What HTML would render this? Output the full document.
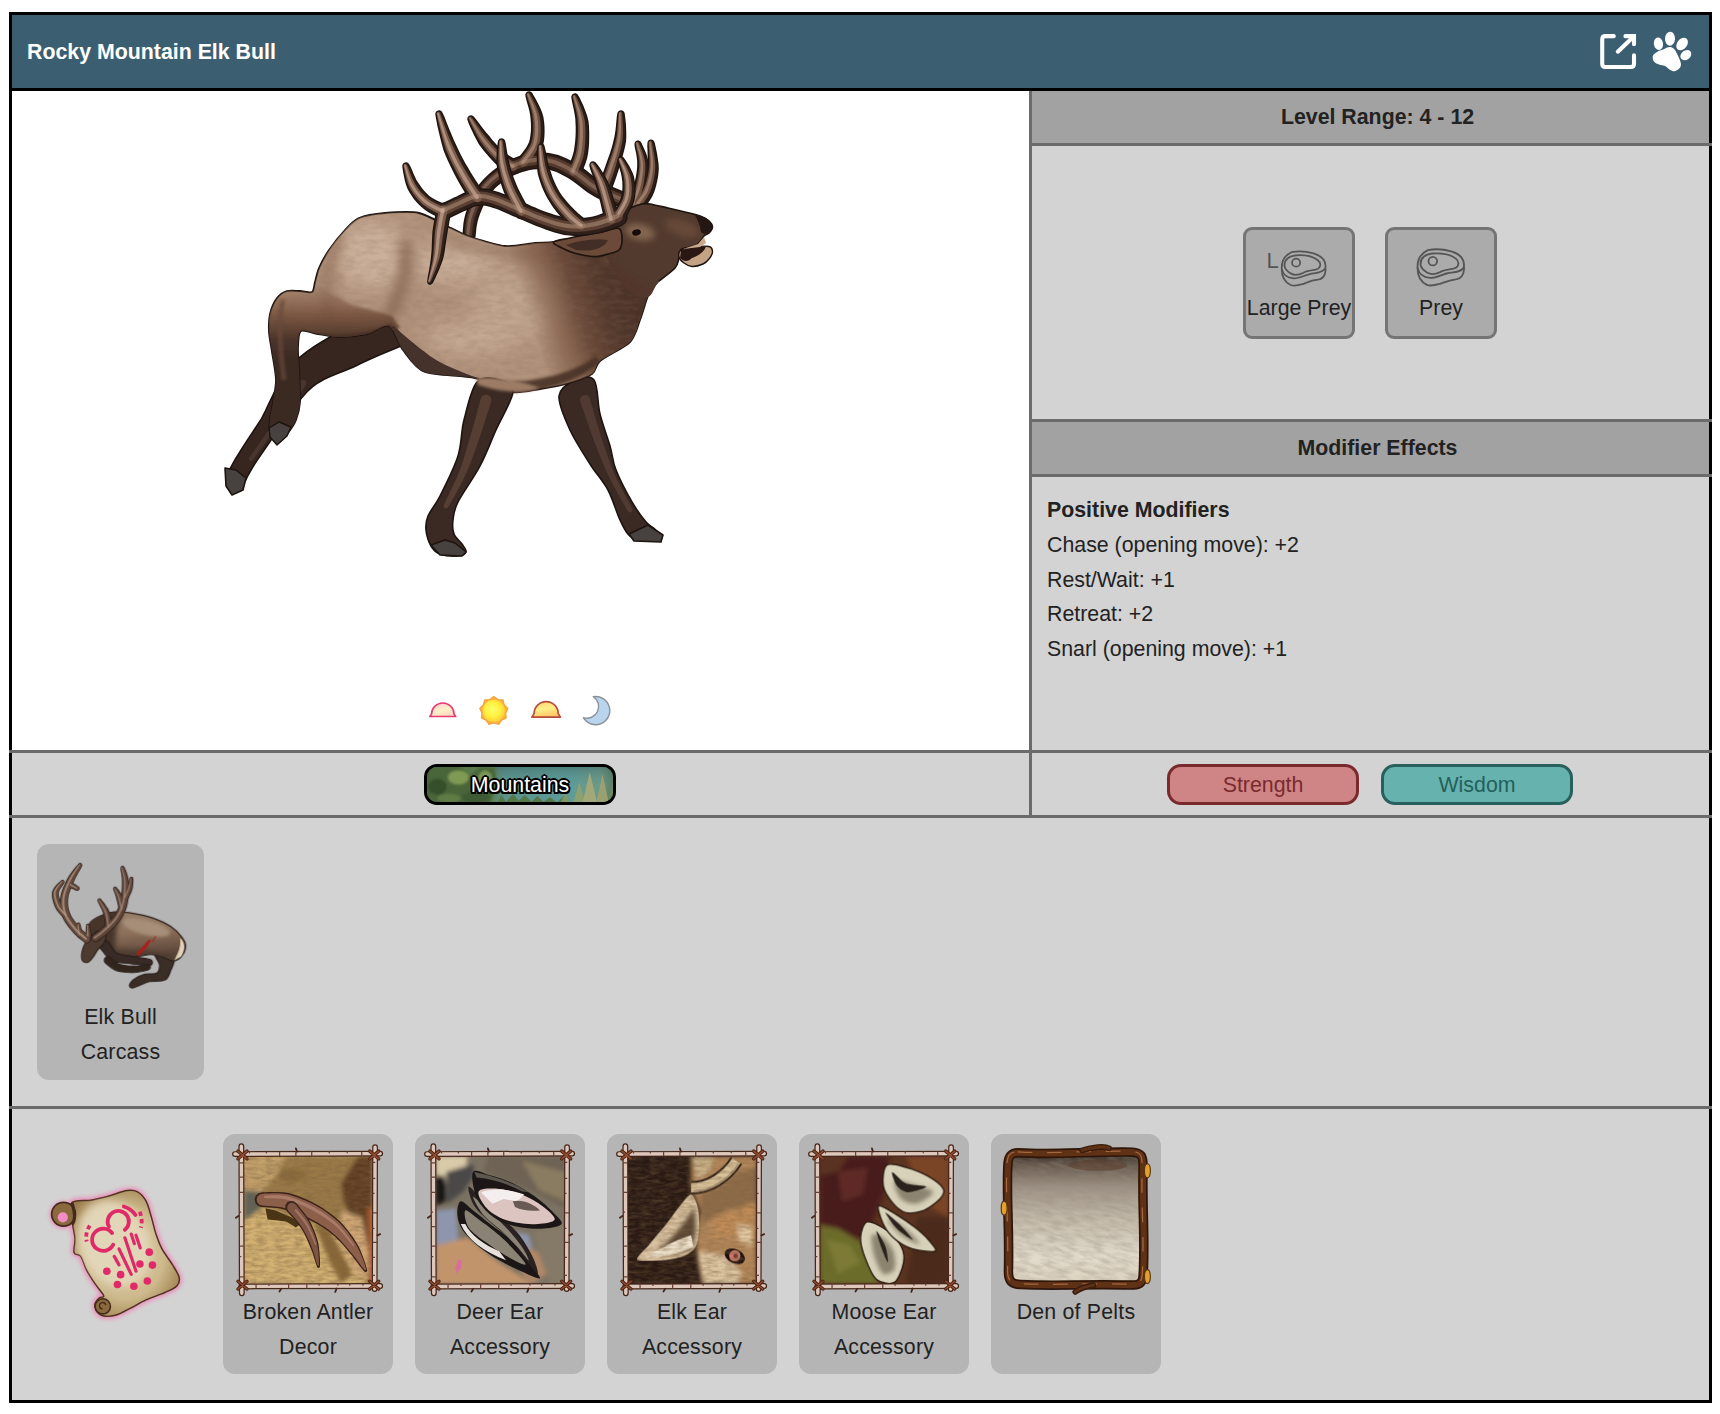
<!DOCTYPE html>
<html lang="en">
<head>
<meta charset="utf-8">
<title>Rocky Mountain Elk Bull</title>
<style>
html,body{margin:0;padding:0;background:#fff;}
body{width:1720px;height:1414px;position:relative;overflow:hidden;font-family:"Liberation Sans",Arial,Helvetica,sans-serif;color:#222;font-size:21.33px;}
.abs{position:absolute;}
#box{position:absolute;left:9px;top:12px;width:1697px;height:1385px;border:3px solid #000;background:#d3d3d3;}
/* coordinates inside #box are relative to inner origin (12,15) */
#hdr{left:0;top:0;width:1697px;height:73px;background:#3b5f71;border-bottom:3px solid #000;}
#title{left:15px;top:1px;height:73px;line-height:73px;color:#fff;font-weight:bold;font-size:21.33px;white-space:nowrap;}
#left{left:0;top:76px;width:1017px;height:659px;background:#fff;}
.vdiv{background:#6b6b6b;}
.hdiv{background:#6b6b6b;height:3px;}
.rh{left:1020px;width:663px;padding-left:14px;height:52px;line-height:53px;background:#a2a2a2;text-align:center;font-weight:bold;font-size:21.33px;color:#222;}
.pbtn{width:106px;height:106px;border:3px solid #757575;border-radius:9px;background:#ababab;top:212px;}
.pbtn span{position:absolute;left:-10px;right:-10px;top:63px;text-align:center;font-size:21.33px;line-height:30px;white-space:nowrap;color:#222;}
#mods{left:1035px;top:478px;font-size:21.33px;line-height:34.8px;white-space:nowrap;color:#222;}
.pill{width:186px;height:35px;top:749px;border:3px solid;border-radius:14px;text-align:center;line-height:36px;font-size:21.33px;}
#mtn{left:412px;top:749px;width:186px;height:35px;border:3px solid #000;border-radius:13px;overflow:hidden;background:#4c6b4a;}
#mtn span{position:absolute;left:0;right:0;top:1px;line-height:35px;text-align:center;color:#fff;font-size:21.33px;text-shadow:-1.5px -1.5px 0 #000,1.5px -1.5px 0 #000,-1.5px 1.5px 0 #000,1.5px 1.5px 0 #000,0 2px 0 #000,2px 0 0 #000,-2px 0 0 #000,0 -2px 0 #000;}
.card{background:#b5b5b5;border-radius:12px;text-align:center;font-size:21.33px;line-height:35px;color:#222;}
.card .t{position:absolute;left:0;right:0;white-space:nowrap;letter-spacing:0.2px;}
</style>
</head>
<body>
<div id="box">
  <div id="hdr" class="abs"></div>
  <div id="title" class="abs">Rocky Mountain Elk Bull</div>
  <svg class="abs" style="left:1578px;top:7px" width="60" height="60" viewBox="0 0 1414 1414" >
<g fill="none" stroke="#fff" stroke-width="96" stroke-linecap="round" stroke-linejoin="round">
<path d="M560 333H365Q288 333 288 410V985Q288 1062 365 1062H960Q1037 1062 1037 985V785"/>
<path d="M655 700L1030 340"/><path d="M835 333H1037V525" stroke-linejoin="miter"/>
</g></svg>
<svg class="abs" style="left:1628px;top:5px" width="70" height="60" viewBox="0 0 1650 1414" >
<g fill="#fff">
<ellipse cx="435" cy="560" rx="108" ry="148" transform="rotate(-8 435 560)"/>
<ellipse cx="708" cy="440" rx="118" ry="165" transform="rotate(3 708 440)"/>
<ellipse cx="992" cy="565" rx="118" ry="165" transform="rotate(38 992 565)"/>
<ellipse cx="1080" cy="830" rx="108" ry="140" transform="rotate(52 1080 830)"/>
<path d="M715 635C741.7 640 774.2 654.2 800 680C825.8 705.8 848.3 750 870 790C891.7 830 914.2 878.3 930 920C945.8 961.7 965 1003.3 965 1040C965 1076.7 954.2 1112.5 930 1140C905.8 1167.5 858.3 1200 820 1205C781.7 1210 738.3 1190 700 1170C661.7 1150 631.7 1105 590 1085C548.3 1065 491.7 1065.8 450 1050C408.3 1034.2 365 1015 340 990C315 965 302.5 930 300 900C297.5 870 305 836.7 325 810C345 783.3 380.8 760 420 740C459.2 720 523.3 705 560 690C596.7 675 614.2 659.2 640 650C665.8 640.8 688.3 630 715 635Z"/>
</g></svg>

  <div id="left" class="abs"><svg class="abs" style="left:0;top:0" width="1017" height="659" viewBox="12 91 1017 659">
<defs>
<filter id="b3" filterUnits="userSpaceOnUse" x="12" y="91" width="1017" height="659"><feGaussianBlur stdDeviation="3"/></filter>
<filter id="b2" filterUnits="userSpaceOnUse" x="12" y="91" width="1017" height="659"><feGaussianBlur stdDeviation="1.8"/></filter>
<filter id="b6" filterUnits="userSpaceOnUse" x="12" y="91" width="1017" height="659"><feGaussianBlur stdDeviation="6"/></filter>
<filter id="b10" filterUnits="userSpaceOnUse" x="12" y="91" width="1017" height="659"><feGaussianBlur stdDeviation="10"/></filter>
<filter id="b1" filterUnits="userSpaceOnUse" x="12" y="91" width="1017" height="659"><feGaussianBlur stdDeviation="0.7"/></filter>
<filter id="fur" filterUnits="userSpaceOnUse" x="12" y="91" width="1017" height="659"><feTurbulence type="fractalNoise" baseFrequency="0.09 0.2" numOctaves="2" seed="4" result="n"/><feColorMatrix in="n" type="matrix" values="0 0 0 0 0.25  0 0 0 0 0.16  0 0 0 0 0.11  0.9 0.9 0 0 -0.72"/></filter>
<linearGradient id="gLegH" gradientUnits="userSpaceOnUse" x1="0" y1="290" x2="0" y2="356"><stop offset="0" stop-color="#7a543e" stop-opacity="0.25"/><stop offset="0.4" stop-color="#6e4a36" stop-opacity="0.85"/><stop offset="0.75" stop-color="#463026" stop-opacity="0.95"/><stop offset="1" stop-color="#3b2a23"/></linearGradient>
<linearGradient id="gNeck" gradientUnits="userSpaceOnUse" x1="528" y1="318" x2="640" y2="282"><stop offset="0" stop-color="#7a5642" stop-opacity="0"/><stop offset="0.2" stop-color="#7a5642" stop-opacity="0.6"/><stop offset="0.42" stop-color="#684737" stop-opacity="0.95"/><stop offset="0.65" stop-color="#54392c"/><stop offset="1" stop-color="#473026"/></linearGradient>
</defs>
<path d="M475.5 236.7L475.8 234.5L476.1 231.6L476.4 228.3L476.9 224.9L477.6 221.4L478.6 218L479.9 214.3L481.6 210L483.4 205.7L485.4 201.5L487.6 197.6L489.9 194.2L492.4 191.2L495.1 188.3L498.1 185.6L501.3 183L504.7 180.6L508.1 178.4L511.5 176.5L515.1 174.7L518.8 173.2L522.5 171.9L526.2 170.9L529.7 170.1L533.2 169.5L536.6 169.2L540.1 169.1L543.6 169.2L547 169.5L550.2 170.1L553.3 170.9L556.4 172.1L559.5 173.5L562.8 175.2L566.2 177.1L569.6 179.1L572.9 181.2L576.3 183.7L579.9 186.5L583.6 189.5L587.6 192.4L591.7 195.1L595.9 197.4L600 199.4L604 201.1L607.8 202.7L611.3 204.2L614.7 205.6L618.1 207.1L621.6 208.7L625 210.2L628.1 211.6L630.7 212.7L632.6 213.6L636.9 214.3L640.9 212.7L643.6 209.4L644.3 205.1L642.7 201.1L639.4 198.4L637.4 197.6L634.8 196.4L631.7 195L628.3 193.5L624.8 192L621.3 190.4L617.8 188.9L614.1 187.4L610.5 185.9L606.9 184.3L603.5 182.7L600.3 180.9L597.1 178.8L593.7 176.3L590.1 173.5L586.4 170.5L582.4 167.6L578.4 164.9L574.5 162.7L570.7 160.5L566.7 158.5L562.6 156.7L558.3 155.1L553.8 153.9L549.3 153.1L544.7 152.6L540.1 152.4L535.5 152.6L530.9 153.1L526.3 153.9L521.7 155.1L517.2 156.7L512.7 158.5L508.3 160.7L504 163L499.9 165.6L496 168.3L492.1 171.2L488.4 174.4L484.7 177.9L481.3 181.7L478.1 185.8L475.3 190.3L472.7 195.1L470.5 200L468.5 204.9L466.9 209.6L465.4 214L464.3 218.4L463.5 222.8L463.1 226.9L462.8 230.5L462.7 233.3L462.5 235.3L463 238.7L465.2 241.3L468.3 242.5L471.7 242L474.3 239.8Z" fill="#1d130f"/>
<path d="M467.8 120.9L468.7 123.5L470.2 126.9L472.1 131L474.2 135.4L476.5 139.8L478.7 143.9L481.3 147.4L484 150.9L486.8 154.3L489.6 157.6L492.4 160.6L495.2 163.4L498.2 166L501.3 168.2L504.2 170L506.8 171.5L508.8 172.7L510.2 173.6L514 174.6L517.8 173.6L520.6 170.8L521.6 167L520.6 163.2L517.8 160.4L516.2 159.6L514.1 158.5L511.8 157.2L509.3 155.8L507 154.3L504.8 152.6L502.4 150.5L499.8 148L497.1 145.2L494.4 142.2L491.7 139.2L489.3 136.1L486.6 133.1L483.7 129.5L480.9 125.7L478.3 122.2L476 119.2L474.2 117.1L472.8 115.7L471 115.2L469.1 115.8L467.7 117.2L467.2 119Z" fill="#1d130f"/>
<path d="M525.5 96.4L526.1 99.1L527.1 102.7L528.3 106.8L529.4 111.1L530.2 115.3L530.6 119L530.9 122.8L531 126.9L530.9 131.1L530.5 135.1L529.9 138.8L529.1 141.9L527.9 144.6L526.1 147.7L523.9 150.8L521.6 153.8L519.4 156.5L517.8 158.6L516.4 162.2L517.1 166.1L519.6 169.2L523.2 170.6L527.1 169.9L530.2 167.4L531.4 165.5L533.5 162.9L536 159.4L538.6 155.4L541.1 151L542.9 146.1L543.9 141.3L544.4 136.4L544.6 131.4L544.5 126.5L544.1 121.7L543.4 117L542 112.2L540 107.4L537.8 103L535.7 99.1L533.9 95.9L532.5 93.6L531.3 92.1L529.6 91.3L527.6 91.5L526.1 92.7L525.3 94.4Z" fill="#1d130f"/>
<path d="M571.4 98.1L571.9 101L572.7 104.8L573.7 109.2L574.6 113.9L575.3 118.5L575.5 122.8L575.7 127.1L575.7 132L575.5 137L575.1 142L574.5 146.7L573.9 150.8L573 154.3L571.9 157.8L570.6 161.1L569.2 164.2L567.9 167L567 169.2L566.5 173.1L568 176.7L571.2 179L575.1 179.5L578.7 178L581 174.8L581.8 172.9L582.9 170.1L584.3 166.6L585.8 162.5L587.2 158L588.1 153.2L588.7 148.3L589.1 143.1L589.2 137.6L589.2 132L589 126.5L588.5 121.2L587.2 116L585.4 110.9L583.5 106.1L581.5 101.8L579.9 98.3L578.6 95.9L577.5 94.2L575.8 93.3L573.9 93.4L572.2 94.5L571.3 96.2Z" fill="#1d130f"/>
<path d="M617.2 114L616.8 116.8L616.4 120.7L616 125.2L615.5 130L614.8 134.7L613.9 139L612.9 143.2L611.7 147.7L610.2 152.4L608.6 157L607 161.6L605.5 165.8L604 170L602.5 174.2L600.9 178.3L599.4 182L598.2 185.1L597.2 187.5L596.9 191.2L598.4 194.6L601.5 196.8L605.2 197.1L608.6 195.6L610.8 192.5L611.6 190.2L612.7 187L614.1 183.2L615.6 179L617.1 174.5L618.5 170.2L619.8 165.8L621.3 161.1L622.7 156.1L624 151.1L625.2 146L626.1 141L626.3 135.8L626.2 130.4L626 125.3L625.6 120.7L625.1 116.8L624.8 114L624.3 112.2L622.9 110.8L621 110.2L619.2 110.7L617.8 112.1Z" fill="#1d130f"/>
<path d="M634.5 145L634.8 147.3L635.5 150.4L636.2 153.8L636.8 157.5L637.2 161.1L637.2 164.3L637.1 167.7L636.7 171.5L636.1 175.5L635.3 179.4L634.5 183.2L633.7 186.4L632.8 189.2L631.8 191.8L630.7 194.3L629.6 196.5L628.5 198.6L627.7 200.2L627.2 203.7L628.4 207L631.2 209.3L634.7 209.8L638 208.6L640.3 205.8L640.9 204.4L641.8 202.3L642.9 199.7L644.2 196.7L645.4 193.2L646.3 189.6L647 185.7L647.7 181.6L648.3 177.2L648.7 172.6L648.9 168.1L648.8 163.7L647.9 159.3L646.7 155.1L645.2 151.2L643.7 147.7L642.4 144.9L641.5 143L640.5 141.4L638.8 140.5L637 140.5L635.4 141.5L634.5 143.2Z" fill="#1d130f"/>
<path d="M647.4 143.4L647.3 146.2L647.5 150.1L647.6 154.6L647.7 159.4L647.6 163.9L647.2 167.7L646.7 171.2L646 174.8L645.2 178.3L644.2 181.6L643.1 184.8L642 187.5L640.8 189.9L639.4 192.2L637.7 194.5L636.1 196.6L634.6 198.5L633.4 200L632.2 203.3L632.7 206.8L635 209.6L638.3 210.8L641.8 210.3L644.6 208L645.5 206.6L646.9 204.7L648.6 202.3L650.6 199.3L652.5 196L654 192.5L655.2 188.9L656.3 185.1L657.2 181.1L658 176.9L658.5 172.7L658.8 168.3L658.5 163.6L657.8 158.6L657 153.6L656.1 149.1L655.3 145.3L654.6 142.6L653.9 140.9L652.5 139.7L650.6 139.4L648.9 140.1L647.7 141.5Z" fill="#1d130f"/>
<path d="M474.3 236.6L474.6 234.4L474.9 231.5L475.2 228.2L475.7 224.7L476.4 221.2L477.4 217.7L478.8 213.8L480.4 209.6L482.3 205.2L484.4 201L486.6 197L488.9 193.5L491.4 190.4L494.3 187.5L497.4 184.7L500.6 182L504 179.6L507.4 177.4L510.9 175.4L514.6 173.7L518.4 172.1L522.1 170.8L525.8 169.7L529.5 168.9L533 168.3L536.6 168L540.1 167.8L543.7 168L547.1 168.3L550.5 168.9L553.6 169.8L556.8 170.9L560.1 172.4L563.4 174.1L566.8 176L570.3 178L573.6 180.2L577 182.7L580.6 185.6L584.4 188.5L588.3 191.4L592.3 194.1L596.5 196.3L600.5 198.3L604.5 200L608.3 201.6L611.8 203.1L615.1 204.5L618.5 206L622.1 207.6L625.5 209.1L628.6 210.5L631.2 211.6L633.1 212.5L636.8 213.1L640.2 211.7L642.5 208.9L643.1 205.2L641.7 201.8L638.9 199.5L637 198.7L634.4 197.5L631.3 196.1L627.8 194.6L624.3 193.1L620.9 191.5L617.3 190L613.7 188.5L610 187L606.4 185.4L603 183.7L599.7 181.9L596.4 179.8L593 177.3L589.4 174.4L585.6 171.5L581.7 168.6L577.7 166L573.9 163.7L570.1 161.6L566.2 159.6L562.2 157.8L557.9 156.3L553.5 155.1L549.1 154.3L544.6 153.8L540.1 153.7L535.6 153.8L531.1 154.3L526.5 155.1L522.1 156.3L517.6 157.8L513.1 159.7L508.8 161.7L504.6 164.1L500.6 166.6L496.7 169.3L492.9 172.2L489.1 175.3L485.6 178.8L482.2 182.5L479.1 186.5L476.3 190.9L473.8 195.6L471.6 200.5L469.6 205.4L468 210L466.6 214.3L465.5 218.7L464.7 223L464.3 227L464 230.6L463.9 233.4L463.7 235.4L464.1 238.2L465.9 240.3L468.4 241.3L471.2 240.9L473.3 239.1Z" fill="#2c1d17"/>
<path d="M468.8 120.3L469.8 122.8L471.3 126.3L473.1 130.4L475.2 134.8L477.5 139.1L479.7 143.1L482.2 146.7L484.9 150.1L487.7 153.5L490.5 156.8L493.3 159.8L496 162.5L499 165L502 167.2L504.9 169L507.4 170.5L509.4 171.6L510.8 172.5L514 173.4L517.2 172.5L519.5 170.2L520.4 167L519.5 163.8L517.2 161.5L515.6 160.6L513.5 159.5L511.1 158.3L508.7 156.8L506.3 155.2L504 153.5L501.6 151.3L498.9 148.8L496.2 146L493.4 143L490.8 139.9L488.3 136.9L485.6 133.7L482.7 130.1L479.9 126.4L477.3 122.8L475 119.8L473.2 117.7L472.2 116.8L471 116.4L469.7 116.8L468.8 117.8L468.4 119Z" fill="#2c1d17"/>
<path d="M526.6 95.9L527.2 98.6L528.2 102.2L529.4 106.3L530.5 110.7L531.4 115L531.7 118.9L532.1 122.7L532.2 126.9L532.1 131.1L531.7 135.2L531.1 139L530.2 142.2L529 145.2L527.1 148.3L524.9 151.5L522.5 154.5L520.4 157.2L518.8 159.3L517.6 162.4L518.2 165.6L520.3 168.2L523.4 169.4L526.6 168.8L529.2 166.7L530.5 164.8L532.5 162.1L535 158.7L537.6 154.8L540 150.4L541.8 145.8L542.7 141.1L543.3 136.3L543.4 131.4L543.3 126.5L542.9 121.8L542.3 117.1L540.8 112.5L538.9 107.8L536.7 103.4L534.6 99.5L532.8 96.3L531.4 94.1L530.6 93L529.4 92.5L528.1 92.6L527 93.4L526.5 94.6Z" fill="#2c1d17"/>
<path d="M572.6 97.8L573 100.6L573.8 104.4L574.8 108.8L575.8 113.5L576.5 118.2L576.7 122.6L576.9 127.1L576.9 132L576.7 137.1L576.3 142.1L575.7 146.9L575.1 151L574.2 154.6L573 158.1L571.7 161.6L570.3 164.7L569 167.5L568.1 169.6L567.7 172.9L569 175.9L571.6 177.9L574.9 178.3L577.9 177L579.9 174.4L580.7 172.4L581.8 169.7L583.2 166.2L584.7 162.2L586 157.7L586.9 153L587.5 148.2L587.9 143L588.1 137.5L588 132L587.8 126.6L587.3 121.4L586 116.3L584.2 111.2L582.3 106.4L580.4 102.2L578.7 98.7L577.4 96.2L576.7 95.1L575.5 94.5L574.2 94.6L573.1 95.3L572.5 96.5Z" fill="#2c1d17"/>
<path d="M618.4 114L618 116.8L617.6 120.7L617.2 125.2L616.7 130L616 134.8L615.1 139.2L614.1 143.5L612.8 148L611.3 152.7L609.7 157.4L608.1 161.9L606.6 166.2L605.1 170.4L603.6 174.6L602 178.7L600.5 182.4L599.3 185.6L598.3 187.9L598 191L599.3 193.8L601.9 195.7L605 196L607.8 194.7L609.7 192.1L610.5 189.8L611.6 186.6L613 182.8L614.5 178.6L616 174.1L617.4 169.8L618.7 165.4L620.1 160.7L621.5 155.8L622.9 150.8L624 145.8L624.9 140.8L625.1 135.7L625.1 130.4L624.8 125.3L624.4 120.7L623.9 116.8L623.6 114L623.2 112.7L622.3 111.8L621 111.4L619.7 111.8L618.8 112.7Z" fill="#2c1d17"/>
<path d="M635.7 144.7L636 147L636.6 150L637.3 153.5L638 157.2L638.4 160.9L638.4 164.3L638.3 167.7L637.9 171.6L637.3 175.6L636.5 179.6L635.7 183.4L634.8 186.7L634 189.5L632.9 192.2L631.8 194.8L630.6 197.1L629.6 199.1L628.8 200.7L628.3 203.6L629.4 206.3L631.7 208.2L634.6 208.7L637.3 207.6L639.2 205.3L639.8 203.9L640.7 201.8L641.8 199.2L643.1 196.2L644.2 192.8L645.2 189.3L645.9 185.5L646.5 181.4L647.1 177L647.5 172.5L647.7 168L647.6 163.7L646.8 159.5L645.5 155.4L644.1 151.5L642.6 148.1L641.3 145.3L640.3 143.3L639.7 142.2L638.6 141.7L637.3 141.7L636.2 142.3L635.7 143.4Z" fill="#2c1d17"/>
<path d="M648.6 143.3L648.5 146.1L648.7 150L648.8 154.5L648.9 159.3L648.8 163.8L648.4 167.8L647.9 171.3L647.2 175L646.4 178.5L645.3 182L644.2 185.2L643.1 188L641.9 190.5L640.4 192.9L638.7 195.2L637 197.3L635.5 199.2L634.4 200.7L633.3 203.4L633.8 206.3L635.7 208.6L638.4 209.7L641.3 209.2L643.6 207.3L644.5 205.9L645.9 204L647.7 201.6L649.6 198.7L651.4 195.5L652.9 192L654.1 188.5L655.1 184.8L656 180.8L656.8 176.7L657.3 172.5L657.6 168.2L657.3 163.6L656.6 158.7L655.8 153.8L654.9 149.2L654.1 145.4L653.4 142.7L652.9 141.6L652 140.8L650.7 140.6L649.6 141.1L648.8 142Z" fill="#2c1d17"/>
<path d="M471.8 235.9L472.1 233.7L472.3 230.8L472.7 227.5L473.1 223.9L473.9 220.2L474.9 216.6L476.3 212.7L477.9 208.4L479.8 203.9L481.9 199.6L484.1 195.5L486.5 191.8L489.2 188.6L492.1 185.5L495.3 182.6L498.6 179.9L502 177.4L505.6 175.1L509.2 173L512.9 171.1L516.8 169.5L520.7 168.1L524.5 166.9L528.3 166.1L532 165.4L535.7 165.1L539.4 164.9L543.1 165.1L546.8 165.4L550.3 166.1L553.7 167L557 168.2L560.4 169.7L563.8 171.5L567.3 173.4L570.8 175.5L574.3 177.7L577.8 180.3L581.4 183.2L585.1 186.1L589 189L592.9 191.5L596.9 193.7L600.8 195.6L604.7 197.3L608.5 198.9L612 200.3L615.4 201.8L618.8 203.3L622.4 204.9L625.8 206.4L628.9 207.8L631.5 208.9L633.4 209.8L635.8 210.2L638.1 209.3L639.6 207.4L640 205L639.1 202.7L637.2 201.2L635.3 200.4L632.7 199.2L629.6 197.8L626.2 196.3L622.7 194.8L619.2 193.2L615.7 191.7L612.1 190.2L608.4 188.7L604.7 187.1L601.2 185.4L597.7 183.5L594.3 181.3L590.8 178.7L587.2 175.8L583.5 172.9L579.6 170L575.8 167.5L572 165.3L568.3 163.2L564.5 161.3L560.5 159.5L556.5 158.1L552.3 156.9L548.1 156.2L543.8 155.7L539.4 155.6L535.1 155.7L530.7 156.2L526.3 156.9L522 158.1L517.7 159.5L513.3 161.3L509.1 163.3L505 165.5L501 167.9L497.2 170.5L493.5 173.4L489.8 176.4L486.4 179.7L483.1 183.3L480.1 187.2L477.3 191.4L474.9 196L472.7 200.8L470.8 205.6L469.1 210.1L467.7 214.4L466.6 218.6L465.9 222.8L465.4 226.7L465.2 230.2L465 233.1L464.8 235.1L465.1 236.9L466.2 238.3L467.9 239L469.7 238.7L471.1 237.6Z" fill="#543a2e"/>
<path d="M468.9 119.4L470 121.8L471.6 125.2L473.6 129.2L475.8 133.5L478.1 137.7L480.5 141.6L483 145L485.7 148.4L488.4 151.7L491.2 154.9L494 157.8L496.7 160.5L499.5 162.8L502.4 164.9L505.2 166.7L507.7 168.1L509.8 169.3L511.2 170.1L513.3 170.7L515.4 170.2L516.9 168.6L517.5 166.5L517 164.4L515.4 162.9L513.8 162L511.8 160.9L509.4 159.6L506.8 158.1L504.3 156.4L501.9 154.5L499.5 152.3L496.8 149.7L494 146.8L491.3 143.7L488.6 140.5L486.1 137.4L483.5 134.2L480.7 130.4L478 126.5L475.5 122.9L473.4 119.8L471.7 117.6L471.1 117L470.3 116.8L469.4 117.1L468.8 117.7L468.6 118.5Z" fill="#6f5142"/>
<path d="M526.7 95.1L527.4 97.7L528.6 101.2L529.9 105.3L531.3 109.7L532.3 114L532.8 118.1L533.2 122L533.4 126.3L533.3 130.6L533 134.9L532.4 138.8L531.5 142.3L530.2 145.6L528.2 148.9L525.9 152.2L523.5 155.3L521.4 158L519.9 160L519.1 162.1L519.5 164.2L520.8 165.9L522.9 166.7L525 166.3L526.7 165L528.1 163L530.1 160.3L532.6 157L535.1 153.2L537.4 149L539.1 144.7L540.1 140.2L540.6 135.6L540.8 130.9L540.7 126.1L540.4 121.4L539.8 116.9L538.5 112.4L536.8 107.8L534.8 103.4L532.8 99.5L531.1 96.2L529.9 93.9L529.3 93.2L528.5 92.8L527.7 92.9L527 93.5L526.6 94.3Z" fill="#6f5142"/>
<path d="M572.7 97L573.3 99.8L574.2 103.5L575.4 107.9L576.5 112.6L577.4 117.4L577.8 121.9L578.1 126.5L578.1 131.5L577.9 136.7L577.6 141.8L577 146.6L576.4 150.8L575.5 154.6L574.3 158.3L572.9 161.9L571.5 165.1L570.3 167.8L569.4 169.9L569.1 172.1L570 174.1L571.7 175.4L573.9 175.7L575.9 174.8L577.2 173.1L578 171.1L579.1 168.3L580.5 164.9L582 161L583.3 156.7L584.2 152.2L584.8 147.5L585.2 142.3L585.4 137L585.5 131.5L585.3 126.2L584.8 121.1L583.7 116.1L582.1 111.1L580.3 106.3L578.6 102.1L577 98.5L575.9 96L575.4 95.3L574.7 94.9L573.8 94.9L573.1 95.4L572.7 96.1Z" fill="#6f5142"/>
<path d="M618.6 113.5L618.3 116.3L618.1 120.2L617.8 124.7L617.4 129.6L616.9 134.5L616.1 139L615.1 143.4L613.8 148L612.4 152.7L610.8 157.4L609.2 162L607.7 166.3L606.3 170.5L604.7 174.8L603.2 178.9L601.7 182.6L600.5 185.8L599.6 188.1L599.4 190.2L600.2 192L601.9 193.2L604 193.4L605.8 192.6L607 190.9L607.9 188.6L609 185.4L610.4 181.6L611.9 177.4L613.5 173L614.9 168.7L616.2 164.3L617.6 159.6L619.1 154.8L620.5 149.8L621.6 144.9L622.5 140L622.9 135L622.9 129.8L622.8 124.8L622.5 120.2L622.2 116.3L622 113.5L621.8 112.7L621.2 112L620.3 111.8L619.5 112L618.8 112.6Z" fill="#6f5142"/>
<path d="M635.8 144L636.2 146.2L636.9 149.2L637.8 152.7L638.6 156.4L639.1 160.2L639.3 163.7L639.2 167.3L638.8 171.2L638.2 175.4L637.5 179.4L636.7 183.3L635.9 186.7L635 189.6L634 192.4L632.8 195L631.7 197.4L630.6 199.4L629.9 201L629.6 202.9L630.3 204.7L631.8 205.9L633.7 206.2L635.5 205.5L636.7 204L637.3 202.5L638.3 200.5L639.4 198L640.6 195L641.8 191.8L642.7 188.3L643.4 184.7L644.1 180.6L644.7 176.3L645.2 171.8L645.4 167.5L645.3 163.3L644.6 159.3L643.5 155.2L642.2 151.3L640.9 147.9L639.7 145.1L638.8 143L638.4 142.3L637.7 141.9L636.8 142L636.1 142.4L635.7 143.1Z" fill="#6f5142"/>
<path d="M648.7 142.7L648.8 145.5L649 149.3L649.3 153.9L649.5 158.7L649.5 163.3L649.3 167.3L648.8 171L648.2 174.8L647.3 178.4L646.3 181.9L645.2 185.2L644 188.2L642.8 190.8L641.2 193.4L639.5 195.8L637.9 198L636.3 199.9L635.3 201.3L634.6 203.1L634.9 205L636.1 206.5L637.9 207.2L639.8 206.9L641.3 205.7L642.3 204.3L643.7 202.4L645.4 200L647.3 197.2L649.1 194.1L650.6 190.8L651.7 187.4L652.8 183.8L653.7 179.9L654.4 175.9L655 171.8L655.3 167.7L655.2 163.1L654.6 158.3L653.9 153.4L653.1 148.8L652.4 145L651.9 142.3L651.6 141.6L650.9 141L650.1 140.9L649.4 141.2L648.8 141.9Z" fill="#6f5142"/>
<path d="M469.4 235.4L469.6 233.2L469.9 230.4L470.2 227L470.7 223.3L471.4 219.5L472.4 215.7L473.8 211.7L475.4 207.3L477.3 202.7L479.5 198.2L481.8 194L484.3 190.2L487 186.8L490 183.5L493.3 180.5L496.7 177.7L500.3 175.1L503.9 172.7L507.6 170.5L511.4 168.6L515.4 166.8L519.4 165.3L523.4 164.1L527.3 163.1L531.2 162.5L535.1 162.1L539 161.9L542.9 162.1L546.7 162.5L550.5 163.1L554.1 164.1L557.6 165.4L561.2 167L564.7 168.8L568.3 170.8L571.9 172.9L575.4 175.2L579 177.9L582.7 180.8L586.4 183.7L590.1 186.4L593.9 188.9L597.7 191L601.6 192.9L605.4 194.5L609.1 196.1L612.7 197.6L616.1 199L619.5 200.6L623.1 202.1L626.5 203.6L629.6 205L632.2 206.2L634.1 207L635.1 207.2L636.1 206.8L636.7 206L636.9 205L636.5 204L635.7 203.4L633.8 202.5L631.2 201.4L628.1 200L624.7 198.5L621.2 196.9L617.7 195.4L614.2 193.9L610.6 192.4L606.9 190.9L603.2 189.2L599.5 187.5L595.9 185.5L592.4 183.2L588.8 180.5L585.1 177.6L581.4 174.7L577.7 172L573.9 169.5L570.2 167.3L566.6 165.3L562.9 163.4L559.1 161.7L555.3 160.3L551.3 159.3L547.3 158.5L543.2 158.1L539 158L534.8 158.1L530.7 158.5L526.5 159.3L522.3 160.3L518.1 161.7L513.9 163.3L509.8 165.2L505.8 167.4L501.9 169.7L498.2 172.2L494.6 174.9L491 177.9L487.6 181.1L484.4 184.5L481.5 188.2L478.9 192.3L476.5 196.8L474.3 201.4L472.4 206.1L470.8 210.6L469.4 214.7L468.3 218.8L467.6 222.8L467.1 226.7L466.8 230.1L466.6 233L466.4 235L466.5 235.8L467 236.4L467.7 236.7L468.5 236.6L469.1 236.1Z" fill="#98786599" filter="url(#b1)"/>
<path d="M469.3 118.6L470.6 120.9L472.3 124.2L474.5 128.1L476.8 132.3L479.3 136.4L481.7 140.1L484.2 143.4L486.9 146.8L489.6 150L492.4 153.1L495.2 155.9L497.8 158.5L500.5 160.7L503.3 162.6L506 164.3L508.5 165.7L510.5 166.9L512 167.7L512.9 168L513.8 167.8L514.4 167.1L514.7 166.2L514.5 165.3L513.8 164.7L512.3 163.8L510.2 162.7L507.8 161.3L505.2 159.8L502.5 158L500 155.9L497.5 153.6L494.8 150.9L492 147.9L489.3 144.8L486.6 141.5L484.1 138.3L481.5 134.9L478.9 131L476.3 127L474 123.3L472 120.1L470.5 117.8L470.2 117.6L469.9 117.5L469.5 117.6L469.3 117.9L469.2 118.2Z" fill="#b8988499" filter="url(#b1)"/>
<path d="M527.2 94.5L528.1 97L529.4 100.4L530.9 104.5L532.4 108.9L533.7 113.3L534.4 117.4L534.9 121.6L535.1 126L535.1 130.4L534.8 134.8L534.2 138.9L533.3 142.7L531.9 146.3L529.8 149.8L527.4 153.3L525 156.5L522.9 159.1L521.4 161.2L521.1 162L521.3 162.9L521.9 163.7L522.7 164L523.6 163.8L524.4 163.2L525.7 161.3L527.8 158.6L530.3 155.3L532.7 151.7L534.9 147.7L536.5 143.7L537.4 139.5L538 135.1L538.2 130.5L538.2 125.9L537.9 121.3L537.4 117L536.3 112.6L534.8 108.1L533 103.7L531.2 99.7L529.7 96.3L528.6 93.9L528.3 93.6L528 93.5L527.6 93.5L527.3 93.8L527.2 94.1Z" fill="#b8988499" filter="url(#b1)"/>
<path d="M573.2 96.4L574 99.1L575.1 102.8L576.4 107.2L577.7 111.9L578.8 116.7L579.4 121.4L579.7 126.1L579.8 131.2L579.7 136.5L579.4 141.6L578.9 146.5L578.2 150.9L577.3 154.9L576.1 158.8L574.7 162.4L573.3 165.7L572.1 168.4L571.2 170.5L571.1 171.5L571.5 172.3L572.2 172.9L573.2 173L574 172.6L574.6 171.9L575.4 169.8L576.6 167.1L578 163.7L579.4 159.9L580.6 155.8L581.6 151.5L582.2 146.9L582.6 141.9L582.9 136.6L582.9 131.2L582.8 126L582.4 121L581.4 116.2L580.1 111.2L578.5 106.5L576.9 102.2L575.6 98.6L574.6 96L574.4 95.7L574.1 95.5L573.7 95.5L573.4 95.7L573.2 96Z" fill="#b8988499" filter="url(#b1)"/>
<path d="M619.2 113.2L619 116L619 119.9L618.8 124.4L618.6 129.4L618.2 134.3L617.5 139L616.6 143.5L615.3 148.2L613.9 153L612.4 157.8L610.8 162.4L609.4 166.7L608 170.9L606.4 175.2L604.9 179.4L603.4 183.1L602.2 186.3L601.3 188.6L601.2 189.5L601.6 190.3L602.3 190.8L603.2 190.9L604 190.5L604.5 189.8L605.3 187.5L606.5 184.3L607.9 180.5L609.5 176.3L611 172L612.4 167.7L613.8 163.3L615.3 158.7L616.8 153.9L618.2 149L619.4 144.1L620.3 139.4L620.8 134.6L621 129.5L621 124.5L620.8 119.9L620.7 116L620.6 113.2L620.5 112.8L620.3 112.6L619.9 112.5L619.5 112.6L619.3 112.8Z" fill="#b8988499" filter="url(#b1)"/>
<path d="M636.3 143.4L636.8 145.6L637.7 148.5L638.6 152L639.6 155.8L640.3 159.6L640.6 163.3L640.6 167L640.3 171.1L639.7 175.3L639 179.5L638.2 183.4L637.5 186.8L636.6 189.9L635.5 192.9L634.3 195.6L633.2 198L632.2 200L631.4 201.5L631.3 202.4L631.6 203.1L632.2 203.7L633.1 203.8L633.8 203.5L634.4 202.9L635 201.3L636 199.3L637.1 196.8L638.3 194L639.4 190.9L640.3 187.6L641.1 184L641.8 180L642.5 175.7L643 171.4L643.2 167.1L643.2 163.1L642.6 159.2L641.7 155.2L640.5 151.4L639.3 148L638.3 145.1L637.5 143L637.4 142.7L637.1 142.5L636.7 142.6L636.4 142.7L636.2 143Z" fill="#b8988499" filter="url(#b1)"/>
<path d="M649.2 142.3L649.4 145L649.8 148.9L650.2 153.4L650.6 158.2L650.8 162.9L650.6 167.1L650.2 171L649.6 174.8L648.7 178.6L647.8 182.2L646.7 185.6L645.5 188.6L644.2 191.5L642.6 194.2L640.8 196.7L639.1 198.9L637.7 200.8L636.6 202.3L636.3 203L636.5 203.9L637 204.5L637.7 204.8L638.6 204.6L639.2 204.1L640.2 202.7L641.6 200.8L643.3 198.5L645.1 195.8L646.9 192.9L648.3 189.8L649.4 186.5L650.5 183L651.4 179.2L652.2 175.3L652.8 171.3L653.2 167.3L653.1 162.9L652.8 158.1L652.2 153.2L651.6 148.7L651 144.9L650.6 142.1L650.4 141.8L650.2 141.6L649.8 141.5L649.5 141.7L649.3 141.9Z" fill="#b8988499" filter="url(#b1)"/>
<path d="M383.7 309.8L378.7 312.3L371.6 315.6L363.1 319.6L353.9 324.1L344.7 328.7L336.4 333.1L329.2 337.5L322 341.8L314.4 346.5L306.6 351.8L298.8 358L291.4 365.4L284.8 374L279.2 383.4L274.1 392.9L269.6 402.1L265.5 410.8L261.6 418.6L257.1 425.4L252.7 432.1L248.5 438.4L244.6 444.4L241.1 449.9L238 455L235.2 459.4L233 463.4L231.1 466.8L229.6 469.7L228.5 471.9L227.6 473.6L226.5 478.4L228 483.1L231.6 486.4L236.4 487.5L241.1 486L244.4 482.4L245.4 480.6L246.5 478.3L247.9 475.7L249.6 472.6L251.6 469.1L254 465L257.1 460.4L260.7 455.1L264.7 449.3L269 443.1L273.6 436.4L278.4 429.4L284 422.1L289.7 414L295.5 405.9L301.3 398.3L307 391.7L312.6 386.6L318.1 382.7L324.1 379.3L330.7 376.3L337.9 373.3L345.7 370.2L353.6 366.9L361.6 363L370.3 359.1L379.3 355.1L387.7 351.5L395 348.4L400.3 346.2L408.3 339.6L411.9 329.9L410.2 319.7L403.6 311.7L393.9 308.1Z" fill="#36261f" stroke="#1d130f" stroke-width="1.6"/>
<path d="M300.1 381.1L297.1 385.8L293 392.4L288 400.2L282.7 408.5L277.5 416.5L272.9 423.6L268.5 430.1L263.9 436.8L259.4 443.3L255.3 449.2L251.9 454.2L249.4 457.8L249 458.8L249.2 459.8L249.8 460.6L250.8 461L251.8 460.8L252.6 460.2L255.3 456.6L258.8 451.7L263.1 445.9L267.7 439.5L272.5 432.9L277.1 426.4L282 419.5L287.4 411.6L293 403.5L298.2 395.9L302.7 389.5L305.9 384.9L306.5 383.2L306.1 381.4L304.9 380.1L303.2 379.5L301.4 379.9Z" fill="#54403a" opacity="0.6" filter="url(#b1)"/>
<path d="M225 468L236 470L246 478L243 490L232 495L226 486Z" fill="#47413f" stroke="#1d130f" stroke-width="1.6" stroke-linejoin="round"/>
<path d="M559 396C558.2 404.3 564.8 418.7 570 430C575.2 441.3 583.7 454 590 464C596.3 474 603 480.7 608 490C613 499.3 616.3 512.3 620 520C623.7 527.7 625.7 533 630 536C634.3 539 641.7 538.8 646 538C650.3 537.2 656 533.7 656 531C656 528.3 650 526.8 646 522C642 517.2 637 510.7 632 502C627 493.3 619.7 479.3 616 470C612.3 460.7 612.7 455.3 610 446C607.3 436.7 602.7 425 600 414C597.3 403 598.2 385.7 594 380C589.8 374.3 580.8 377.3 575 380C569.2 382.7 559.8 387.7 559 396Z" fill="#3b2a23" stroke="#1d130f" stroke-width="1.6"/>
<path d="M580.2 401.5L581.8 405.9L583.9 411.9L586.3 419.1L589 426.8L591.7 434.4L594.2 441.3L596.6 447.6L599 453.6L601.4 459.6L603.9 465.5L606.5 471.4L609.3 477.3L612.4 483.5L615.9 490.1L619.5 496.6L622.9 502.5L625.7 507.6L627.8 511.2L628.7 512.1L629.9 512.5L631.2 512.2L632.1 511.3L632.5 510.1L632.2 508.8L630.3 505.1L627.5 500L624.3 493.9L620.9 487.4L617.6 480.9L614.7 474.7L612.3 468.9L610.1 463.1L608 457.1L605.9 451.1L603.8 445L601.8 438.7L599.6 431.8L597.2 424.1L594.9 416.4L592.8 409.1L591 402.9L589.8 398.5L588.4 396.3L586.1 395.1L583.5 395.2L581.3 396.6L580.1 398.9Z" fill="#5a4238" opacity="0.7" filter="url(#b1)"/>
<path d="M629 534L648 525L663 535L661 542L634 541Z" fill="#47413f" stroke="#1d130f" stroke-width="1.6" stroke-linejoin="round"/>
<clipPath id="cBody"><path d="M419 213C409.8 210.9 393.4 212.3 385 213C376.6 213.7 364.6 215.6 359 218C353.4 220.4 349.2 225.5 345 230C340.8 234.5 332.6 244.7 329 250C325.4 255.3 321 263.5 319 268C317 272.5 316 278.6 315 282C314 285.4 314.1 290.7 312 292C309.9 293.3 303.5 291.1 300 291C296.5 290.9 290.2 290 287 291C283.8 292 279.4 294.8 277 298C274.6 301.2 271.1 309.2 270 314C268.9 318.8 268.7 326.7 269 332C269.3 337.3 271 345.3 272 352C273 358.7 275.9 373 276 380C276.1 387 273.8 396.7 273 402C272.2 407.3 270.4 413.8 270 418C269.6 422.2 269 428.5 270 432C271 435.5 274.6 442.7 277 443C279.4 443.3 284.3 437.2 287 434C289.7 430.8 294.2 424.5 296 420C297.8 415.5 299.6 409 300 402C300.4 395 299.3 377.7 299 370C298.7 362.3 297.7 352.5 298 347C298.3 341.5 298.2 332.8 301 331C303.8 329.2 312.5 333.2 318 334C323.5 334.8 333.1 337 340 337C346.9 337 360.1 335.5 367 334C373.9 332.5 384 323.8 389 326C394 328.2 398 343.6 403 350C408 356.4 414.9 368.1 425 372C435.1 375.9 462.8 375.2 475 378C487.2 380.8 502.9 390.5 512 392C521.1 393.5 532.4 390.1 540 389C547.6 387.9 558.7 386.1 566 384C573.3 381.9 587.2 377.2 592 374C596.8 370.8 594.7 365.5 600 361C605.3 356.5 624.4 347.7 630 342C635.6 336.3 637.5 326.4 640 320C642.5 313.6 645.8 301 648 296C650.2 291 652.9 287.9 656 284C659.1 280.1 668.3 272.8 670 268C671.7 263.2 672.2 255.6 668 250C663.8 244.4 647.3 231.4 640 228C632.7 224.6 623.7 224.9 616 226C608.3 227.1 593.7 233.8 585 236C576.3 238.2 561 241 554 242C547 243 541.9 242.4 535 243C528.1 243.6 514 246.8 505 246C496 245.2 478.6 239.5 471 237C463.4 234.5 458.3 231.4 451 228C443.7 224.6 428.2 215.1 419 213Z"/></clipPath>
<path d="M419 213C409.8 210.9 393.4 212.3 385 213C376.6 213.7 364.6 215.6 359 218C353.4 220.4 349.2 225.5 345 230C340.8 234.5 332.6 244.7 329 250C325.4 255.3 321 263.5 319 268C317 272.5 316 278.6 315 282C314 285.4 314.1 290.7 312 292C309.9 293.3 303.5 291.1 300 291C296.5 290.9 290.2 290 287 291C283.8 292 279.4 294.8 277 298C274.6 301.2 271.1 309.2 270 314C268.9 318.8 268.7 326.7 269 332C269.3 337.3 271 345.3 272 352C273 358.7 275.9 373 276 380C276.1 387 273.8 396.7 273 402C272.2 407.3 270.4 413.8 270 418C269.6 422.2 269 428.5 270 432C271 435.5 274.6 442.7 277 443C279.4 443.3 284.3 437.2 287 434C289.7 430.8 294.2 424.5 296 420C297.8 415.5 299.6 409 300 402C300.4 395 299.3 377.7 299 370C298.7 362.3 297.7 352.5 298 347C298.3 341.5 298.2 332.8 301 331C303.8 329.2 312.5 333.2 318 334C323.5 334.8 333.1 337 340 337C346.9 337 360.1 335.5 367 334C373.9 332.5 384 323.8 389 326C394 328.2 398 343.6 403 350C408 356.4 414.9 368.1 425 372C435.1 375.9 462.8 375.2 475 378C487.2 380.8 502.9 390.5 512 392C521.1 393.5 532.4 390.1 540 389C547.6 387.9 558.7 386.1 566 384C573.3 381.9 587.2 377.2 592 374C596.8 370.8 594.7 365.5 600 361C605.3 356.5 624.4 347.7 630 342C635.6 336.3 637.5 326.4 640 320C642.5 313.6 645.8 301 648 296C650.2 291 652.9 287.9 656 284C659.1 280.1 668.3 272.8 670 268C671.7 263.2 672.2 255.6 668 250C663.8 244.4 647.3 231.4 640 228C632.7 224.6 623.7 224.9 616 226C608.3 227.1 593.7 233.8 585 236C576.3 238.2 561 241 554 242C547 243 541.9 242.4 535 243C528.1 243.6 514 246.8 505 246C496 245.2 478.6 239.5 471 237C463.4 234.5 458.3 231.4 451 228C443.7 224.6 428.2 215.1 419 213Z" fill="#b1927b" stroke="#1d130f" stroke-width="1.8" stroke-linejoin="round"/>
<g clip-path="url(#cBody)">
<ellipse cx="372" cy="255" rx="38" ry="34" fill="#cbb09b" filter="url(#b10)"/>
<ellipse cx="455" cy="262" rx="45" ry="22" fill="#c8ad98" filter="url(#b10)"/>
<ellipse cx="520" cy="305" rx="50" ry="35" fill="#c0a48e" filter="url(#b10)"/>
<ellipse cx="470" cy="338" rx="45" ry="16" fill="#c6aa94" filter="url(#b10)"/>
<path d="M405 240C410 270 400 300 385 322" stroke="#8d6d58" stroke-width="12" fill="none" filter="url(#b6)"/>
<path d="M340 236C328 262 322 290 330 320" stroke="#90705a" stroke-width="9" fill="none" filter="url(#b6)" opacity="0.8"/>
<path d="M445 236C470 252 520 257 560 252" stroke="#8f6e58" stroke-width="8" fill="none" filter="url(#b6)" opacity="0.8"/>
<rect x="500" y="200" width="200" height="220" fill="url(#gNeck)"/>
<rect x="300" y="200" width="380" height="200" filter="url(#fur)" opacity="0.36"/>
<path d="M318 286L296 284L262 290L258 460L310 460L304 338L340 344L372 340L400 328L392 316L350 304Z" fill="url(#gLegH)" filter="url(#b2)"/>
<path d="M300 334C330 340 365 338 392 326" stroke="#4a3227" stroke-width="5" fill="none" filter="url(#b2)"/>
<path d="M283 300C278 320 280 350 284 380" stroke="#6a4a3a" stroke-width="5" fill="none" filter="url(#b2)" opacity="0.7"/>
<path d="M388 328L401 352L424 376L480 382L500 388C476 376 450 370 430 356C414 344 402 334 394 326Z" fill="#45302a" filter="url(#b1)"/>
<path d="M510 394C540 392 575 384 600 362L596 356C575 372 545 380 512 382Z" fill="#4a3228" filter="url(#b2)" opacity="0.9"/>
</g>
<path d="M269 428L279 422L291 427L287 436L277 445L270 437Z" fill="#47413f" stroke="#1d130f" stroke-width="1.4" stroke-linejoin="round"/>
<path d="M477 382C471 388.7 467.2 407.7 464 420C460.8 432.3 462 443.3 458 456C454 468.7 445 486 440 496C435 506 430.3 510.3 428 516C425.7 521.7 425.5 525 426 530C426.5 535 428.7 542 431 546C433.3 550 435.5 552.3 440 554C444.5 555.7 453.7 556.3 458 556C462.3 555.7 465.3 554 466 552C466.7 550 464 547 462 544C460 541 455.5 538 454 534C452.5 530 452.3 525.3 453 520C453.7 514.7 453.5 511 458 502C462.5 493 473.7 478 480 466C486.3 454 490.5 442.3 496 430C501.5 417.7 512.3 400.3 513 392C513.7 383.7 506 381.7 500 380C494 378.3 483 375.3 477 382Z" fill="#3b2a23" stroke="#1d130f" stroke-width="1.6"/>
<path d="M480.7 398.4L479.6 402.9L477.9 409.1L476 416.5L473.8 424.2L471.7 431.8L469.7 438.6L467.9 444.7L466.2 450.5L464.5 456.2L462.7 461.7L460.8 467.2L458.8 472.6L456.4 478.4L453.5 484.6L450.6 490.7L447.8 496.5L445.4 501.3L443.8 504.9L443.5 506.1L443.9 507.3L444.9 508.2L446.1 508.5L447.3 508.1L448.2 507.1L450.2 503.8L452.8 499.1L455.9 493.5L459.2 487.4L462.4 481.2L465.2 475.4L467.6 469.9L469.9 464.4L472 458.8L474.1 453.2L476.2 447.4L478.3 441.4L480.6 434.6L483.1 427L485.5 419.3L487.8 412L489.8 405.9L491.3 401.6L491.3 398.7L490 396.2L487.6 394.7L484.7 394.7L482.2 396Z" fill="#5e4439" opacity="0.75" filter="url(#b1)"/>
<path d="M431 545L445 540L455 543L466 552L462 556L440 555Z" fill="#47413f" stroke="#1d130f" stroke-width="1.4" stroke-linejoin="round"/>
<path d="M476 378C492 376 520 380 540 388C520 395 498 391 478 385Z" fill="#9c7c65" filter="url(#b2)"/>
<clipPath id="cHead"><path d="M604 226C606.2 220.8 611.7 218 616 215C620.3 212 625.7 209.8 630 208C634.3 206.2 638.7 204.7 642 204C645.3 203.3 645.7 203.3 650 204C654.3 204.7 661.8 206.6 668 208C674.2 209.4 681.7 211.2 687 212.5C692.3 213.8 696.3 214.6 700 216C703.7 217.4 706.9 219.2 709 221C711.1 222.8 712.5 225 712.5 227C712.5 229 710.4 231.5 709 233C707.6 234.5 705.8 234.2 704 236C702.2 237.8 700.3 242.2 698 244C695.7 245.8 692.8 246.1 690 247C687.2 247.9 682.8 247.7 681 249.5C679.2 251.3 680 254.9 679 258C678 261.1 678.3 264.2 675 268C671.7 271.8 663.5 276.2 659 281C654.5 285.8 652.8 295.2 648 297C643.2 298.8 636 297.2 630 292C624 286.8 616.5 273.7 612 266C607.5 258.3 604.3 252.7 603 246C601.7 239.3 601.8 231.2 604 226Z"/></clipPath>
<path d="M604 226C606.2 220.8 611.7 218 616 215C620.3 212 625.7 209.8 630 208C634.3 206.2 638.7 204.7 642 204C645.3 203.3 645.7 203.3 650 204C654.3 204.7 661.8 206.6 668 208C674.2 209.4 681.7 211.2 687 212.5C692.3 213.8 696.3 214.6 700 216C703.7 217.4 706.9 219.2 709 221C711.1 222.8 712.5 225 712.5 227C712.5 229 710.4 231.5 709 233C707.6 234.5 705.8 234.2 704 236C702.2 237.8 700.3 242.2 698 244C695.7 245.8 692.8 246.1 690 247C687.2 247.9 682.8 247.7 681 249.5C679.2 251.3 680 254.9 679 258C678 261.1 678.3 264.2 675 268C671.7 271.8 663.5 276.2 659 281C654.5 285.8 652.8 295.2 648 297C643.2 298.8 636 297.2 630 292C624 286.8 616.5 273.7 612 266C607.5 258.3 604.3 252.7 603 246C601.7 239.3 601.8 231.2 604 226Z" fill="#523a2e"/>
<path d="M604 226C606 224.2 611.7 218 616 215C620.3 212 625.7 209.8 630 208C634.3 206.2 638.7 204.7 642 204C645.3 203.3 645.7 203.3 650 204C654.3 204.7 661.8 206.6 668 208C674.2 209.4 681.7 211.2 687 212.5C692.3 213.8 696.3 214.6 700 216C703.7 217.4 706.9 219.2 709 221C711.1 222.8 712.5 225 712.5 227C712.5 229 710.4 231.5 709 233C707.6 234.5 705.8 234.2 704 236C702.2 237.8 700.3 242.2 698 244C695.7 245.8 692.8 246.1 690 247C687.2 247.9 682.8 247.7 681 249.5C679.2 251.3 680 254.9 679 258C678 261.1 678.3 264.2 675 268C671.7 271.8 661.7 278.8 659 281" fill="none" stroke="#1d130f" stroke-width="1.6"/>
<g clip-path="url(#cHead)">
<ellipse cx="640" cy="232" rx="15" ry="8" fill="#a3826599" filter="url(#b3)" transform="rotate(12 640 232)"/>
<ellipse cx="682" cy="228" rx="18" ry="8" fill="#74543f99" filter="url(#b3)" transform="rotate(20 682 228)"/>
<path d="M598 230C606 262 630 282 662 296L598 296Z" fill="#523629" filter="url(#b3)"/>
</g>
<path d="M694 214C705 216 712.5 221 712.5 227C711 233 705 236 701 232C700 225 698 220 694 214Z" fill="#241713"/>
<path d="M681 250C683.5 248.3 689.3 247.6 694 247C698.7 246.4 705.9 245.7 709 246.5C712.1 247.3 712.5 249.9 712.5 252C712.5 254.1 710.6 257 709 259C707.4 261 705.8 262.8 703 264C700.2 265.2 695.2 266.7 692 266.5C688.8 266.3 686.2 264.6 684 263C681.8 261.4 679.5 259.2 679 257C678.5 254.8 678.5 251.7 681 250Z" fill="#c4a284" stroke="#1d130f" stroke-width="1.4"/>
<path d="M681 250L694 247L706 246.5C704 252 698 256 692 258C688 262 684 262 680 258Z" fill="#2a1714"/>
<path d="M683 249L698 244L704 237L706 243L700 247Z" fill="#c9a98c"/>
<ellipse cx="636.5" cy="232.5" rx="4.4" ry="3" fill="#160d0b" transform="rotate(-12 636.5 232.5)"/>
<path d="M553.6 242C554.9 240.3 564.8 239.2 570 238C575.2 236.8 579.5 236.1 585 235C590.5 233.9 597.3 232.6 603 231.5C608.7 230.4 615.8 227.1 619 228.5C622.2 229.9 622 236.4 622 240C622 243.6 621.3 247.7 619 250C616.7 252.3 611.7 252.9 608 254C604.3 255.1 600.4 256.4 596.6 256.7C592.8 256.9 588.8 256.1 585 255.5C581.2 254.9 577.8 254.2 574 253C570.2 251.8 565.4 249.8 562 248C558.6 246.2 552.3 243.7 553.6 242Z" fill="#6b4a39" stroke="#1d130f" stroke-width="1.7"/>
<path d="M566 245C580 240 596 238 608 240C604 249 590 252 576 250Z" fill="#3e2a22" opacity="0.85" filter="url(#b1)"/>
<path d="M614.4 208L612 209.1L608.8 210.5L605.2 212.2L601.3 213.8L597.5 215.2L594 216.2L590.4 217L586.5 217.6L582.5 218.1L578.5 218.5L574.6 218.5L570.9 218.4L567.1 217.9L563.3 217.2L559.3 216.1L555.1 214.9L550.9 213.5L546.8 212.2L542.8 210.8L539 209.2L535.2 207.6L531.3 205.9L527.3 204.1L523.3 202.4L519.3 200.6L515.1 198.8L510.9 197L506.7 195.1L502.6 193.5L498.6 192.1L495 191L491.6 190L488.2 189.1L484.7 188.5L480.9 188.2L476.9 188.4L472.8 189.3L469 190.5L465.5 192.1L462.3 193.6L459.4 195.1L456.6 196.4L453.5 197.8L450.1 199.4L446.8 201L443.8 202.4L441.2 203.6L439.4 204.5L436.1 207.3L434.7 211.4L435.5 215.6L438.3 218.9L442.4 220.3L446.6 219.5L448.4 218.6L451 217.4L454 215.9L457.2 214.4L460.3 212.9L463.4 211.6L466.5 210.2L469.5 208.8L472.4 207.6L474.9 206.6L477.1 205.9L479.1 205.6L480.9 205.4L482.9 205.5L485 205.8L487.5 206.3L490.3 207L493.4 207.9L496.8 209L500.4 210.5L504.3 212.2L508.4 214L512.6 215.9L516.7 217.6L520.7 219.3L524.6 221L528.6 222.8L532.7 224.6L536.9 226.3L541.2 227.8L545.5 229.4L549.9 230.9L554.5 232.4L559.2 233.7L564.1 234.9L569.1 235.6L574.2 236L579.1 236L584 235.7L588.8 235.3L593.4 234.6L598 233.8L602.8 232.7L607.6 231.2L612.1 229.6L616.1 228L619.3 226.8L621.6 226L625.6 223L627.6 218.4L627 213.4L624 209.4L619.4 207.4Z" fill="#1d130f"/>
<path d="M447.4 205.2L445.3 204.3L442.3 203L439.1 201.5L435.8 199.9L432.8 198.3L430.3 196.7L428.2 194.9L426 192.8L423.9 190.5L421.9 188.1L420.1 185.6L418.4 183.1L416.7 180.4L415 177.1L413.4 173.5L412 170L410.7 167L409.6 164.9L408.5 163.2L406.8 162.3L404.9 162.4L403.2 163.5L402.3 165.2L402.4 167.1L402.7 169.4L403.2 172.6L404 176.5L404.9 180.7L406.1 184.9L407.6 188.9L409.4 192.3L411.5 195.6L413.7 198.7L416.2 201.7L418.8 204.6L421.7 207.3L425.1 210L428.8 212.4L432.5 214.5L435.9 216.3L438.7 217.7L440.6 218.8L444.4 219.6L448.2 218.4L450.8 215.4L451.6 211.6L450.4 207.8Z" fill="#1d130f"/>
<path d="M436.5 208.6L436.1 210.9L435.5 214.1L434.7 218L433.9 222.2L433.2 226.6L432.5 230.9L432.2 235.3L432 239.8L431.8 244.2L431.7 248.6L431.4 252.8L431 256.8L430.5 261L429.8 265.6L429 270.3L428.2 274.6L427.5 278.4L427.2 281.1L427.2 282.6L427.9 284L429.1 284.8L430.6 284.8L432 284.1L432.8 282.9L434.1 280.5L435.8 277.1L437.6 273L439.6 268.4L441.4 263.8L443 259.2L444.1 254.7L444.9 250.1L445.5 245.5L446.2 241.1L446.8 236.9L447.5 233.1L448.1 229.1L448.9 224.9L449.6 220.8L450.4 217L451 213.8L451.5 211.4L451.2 207.5L449 204.3L445.4 202.5L441.5 202.8L438.3 205Z" fill="#1d130f"/>
<path d="M484.9 193.5L483.3 191.2L481.1 188.1L478.5 184.4L475.8 180.4L473.1 176.3L470.6 172.2L468.2 168.1L465.7 163.9L463.3 159.5L460.9 154.9L458.6 150.2L456.4 145.5L453.9 140.2L451.3 134L448.7 127.7L446.3 121.7L444.3 116.5L442.6 112.9L441.6 111.2L439.8 110.3L437.9 110.4L436.2 111.4L435.3 113.2L435.4 115.1L436.1 119L437.1 124.4L438.5 130.8L440.2 137.7L441.9 144.4L443.6 150.5L445.8 155.9L448 161.1L450.4 166L452.7 170.8L455.1 175.4L457.4 179.8L459.9 184.3L462.6 188.8L465.2 193.1L467.7 197L469.7 200.2L471.1 202.5L474.3 205.4L478.5 206.3L482.5 204.9L485.4 201.7L486.3 197.5Z" fill="#1d130f"/>
<path d="M528.7 208.5L527.3 205.9L525.3 202.3L523 198.1L520.7 193.6L518.5 189.2L516.7 185.3L515.2 181.6L513.7 177.8L512.4 173.9L511.3 170.2L510.3 166.5L509.4 162.9L508.5 159.3L507.7 155.3L507 151.3L506.4 147.5L505.9 144.3L505.4 141.9L504.8 140L503.4 138.7L501.5 138.2L499.6 138.8L498.3 140.2L497.8 142.1L497.5 144.5L497.1 147.7L496.7 151.7L496.5 156.1L496.4 160.6L496.6 165.1L497.3 169.3L498.2 173.5L499.2 177.8L500.4 182.1L501.8 186.4L503.3 190.7L505.2 195.3L507.5 200.2L509.9 204.9L512.1 209.3L514 212.9L515.3 215.5L517.9 218.4L521.7 219.6L525.5 218.7L528.4 216.1L529.6 212.3Z" fill="#1d130f"/>
<path d="M586.6 220L585.3 219L583.6 217.7L581.7 216.3L579.6 214.6L577.6 212.8L575.5 210.7L573 208.3L570.3 205.4L567.4 202.3L564.7 199L562.1 195.7L559.9 192.5L557.9 189.1L556.1 185.5L554.4 181.7L552.8 177.9L551.5 174.1L550.3 170.4L549 166.5L547.9 162.1L547 157.5L546.2 153.2L545.4 149.4L544.7 146.7L544.1 144.8L542.6 143.6L540.7 143.3L538.8 143.9L537.6 145.4L537.3 147.3L537 150.1L536.9 153.9L536.8 158.5L536.8 163.5L537.1 168.7L537.7 173.6L538.9 178.1L540.4 182.5L542 186.9L543.8 191.2L545.9 195.4L548.1 199.5L550.6 203.6L553.4 207.7L556.3 211.5L559.2 215.1L562 218.3L564.5 221.3L567.2 223.9L569.9 226.3L572.3 228.2L574.5 229.9L576.2 231.1L577.4 232L581 233.5L584.9 233L588 230.6L589.5 227L589 223.1Z" fill="#1d130f"/>
<path d="M619.4 218.2L619 217.1L618.6 215.6L618.1 213.8L617.5 211.5L616.8 209L616 206.1L615 202.8L613.8 198.9L612.5 194.6L611.1 190.2L609.6 185.8L608.1 181.7L606.1 177.9L603.9 174.2L601.7 170.7L599.6 167.6L597.8 165.1L596.4 163.3L595.1 161.9L593.2 161.3L591.3 161.6L589.9 162.9L589.3 164.8L589.6 166.7L590.2 168.9L591.2 171.9L592.5 175.3L593.7 179L594.9 182.7L595.9 186.3L597 189.9L598.1 194L599.2 198.3L600.3 202.5L601.2 206.5L602 209.9L602.7 212.7L603.3 215.1L603.7 217.2L604.1 219L604.4 220.6L604.6 221.8L606.5 225.2L609.8 227.3L613.8 227.4L617.2 225.5L619.3 222.2Z" fill="#1d130f"/>
<path d="M626 217.4L626.9 215.8L628.3 213.5L630 210.6L631.8 207.3L633.5 203.5L634.7 199.6L635.2 195.8L635.5 191.9L635.5 188.1L635.2 184.3L634.7 180.5L634 176.8L632.7 173L630.9 169.3L629.1 165.8L627.2 162.7L625.6 160.2L624.4 158.5L623.2 157L621.4 156.3L619.5 156.6L618 157.8L617.3 159.6L617.6 161.5L618.1 163.6L618.9 166.5L619.9 169.7L620.9 173.1L621.6 176.4L622 179.2L622.3 182L622.4 185.1L622.4 188.2L622.2 191.2L621.8 194L621.3 196.4L620.6 198.6L619.5 201.2L618 203.9L616.5 206.5L615 208.8L614 210.6L613.1 214L614.1 217.5L616.6 220L620 220.9L623.5 219.9Z" fill="#1d130f"/>
<path d="M614.8 209.1L612.4 210.2L609.3 211.7L605.6 213.3L601.7 214.9L597.9 216.3L594.3 217.4L590.6 218.1L586.6 218.8L582.6 219.3L578.5 219.7L574.6 219.7L570.7 219.6L566.9 219.1L563 218.3L558.9 217.3L554.7 216L550.5 214.7L546.4 213.3L542.4 211.9L538.6 210.3L534.7 208.7L530.8 206.9L526.8 205.2L522.8 203.5L518.8 201.7L514.7 199.9L510.5 198.1L506.3 196.3L502.1 194.6L498.2 193.2L494.7 192.1L491.3 191.1L488 190.3L484.5 189.7L480.9 189.4L477.1 189.6L473.1 190.4L469.4 191.7L466 193.2L462.8 194.7L459.9 196.2L457.1 197.5L454 198.9L450.6 200.5L447.3 202L444.3 203.5L441.7 204.7L439.9 205.6L437.1 208L435.9 211.5L436.6 215.1L439 217.9L442.5 219.1L446.1 218.4L447.9 217.5L450.5 216.3L453.4 214.8L456.6 213.3L459.8 211.8L462.9 210.5L466 209.1L469 207.7L471.9 206.5L474.5 205.4L476.8 204.7L478.9 204.4L480.9 204.2L483 204.3L485.3 204.6L487.8 205.1L490.6 205.8L493.8 206.8L497.2 207.9L500.8 209.4L504.8 211.1L508.9 212.9L513.1 214.8L517.2 216.5L521.1 218.2L525.1 219.9L529 221.7L533.1 223.4L537.4 225.1L541.6 226.7L545.9 228.2L550.3 229.8L554.8 231.2L559.5 232.6L564.3 233.7L569.3 234.4L574.2 234.8L579.1 234.8L583.9 234.5L588.6 234.1L593.2 233.4L597.7 232.6L602.4 231.5L607.2 230.1L611.6 228.5L615.6 226.9L618.9 225.7L621.2 224.9L624.7 222.3L626.4 218.2L625.9 213.8L623.3 210.3L619.2 208.6Z" fill="#30201a"/>
<path d="M446.9 206.3L444.7 205.3L441.8 204.1L438.5 202.6L435.2 201L432.1 199.3L429.6 197.6L427.3 195.7L425.1 193.6L423 191.3L420.9 188.8L419.1 186.2L417.4 183.7L415.6 180.9L413.9 177.5L412.3 173.9L410.8 170.4L409.5 167.4L408.4 165.2L407.7 164.1L406.6 163.5L405.2 163.6L404.1 164.3L403.5 165.4L403.6 166.8L403.9 169.1L404.4 172.3L405.1 176.1L406 180.3L407.2 184.5L408.6 188.3L410.5 191.7L412.5 194.9L414.7 198L417.1 200.9L419.6 203.7L422.4 206.4L425.7 209L429.4 211.3L433.1 213.4L436.5 215.2L439.2 216.6L441.1 217.7L444.4 218.4L447.5 217.3L449.7 214.9L450.4 211.6L449.3 208.5Z" fill="#30201a"/>
<path d="M437.7 208.8L437.3 211.1L436.7 214.3L435.9 218.2L435.1 222.4L434.4 226.8L433.7 231.1L433.4 235.5L433.2 239.9L433 244.4L432.8 248.7L432.6 253L432.1 257L431.7 261.3L431 266L430.1 270.6L429.3 275L428.7 278.7L428.4 281.5L428.3 282.4L428.7 283.2L429.5 283.6L430.4 283.7L431.2 283.3L431.6 282.5L432.9 280.1L434.6 276.7L436.5 272.6L438.4 268.1L440.3 263.5L441.9 259L442.9 254.5L443.7 249.9L444.3 245.4L445 241L445.6 236.8L446.3 232.9L447 228.9L447.7 224.7L448.5 220.6L449.2 216.8L449.8 213.6L450.3 211.2L450 207.9L448.2 205.2L445.2 203.7L441.9 204L439.2 205.8Z" fill="#30201a"/>
<path d="M483.9 194.1L482.3 191.8L480.1 188.7L477.5 185.1L474.8 181L472.1 176.9L469.5 172.8L467.1 168.7L464.6 164.4L462.2 160L459.8 155.4L457.5 150.7L455.3 145.9L452.7 140.6L450.1 134.4L447.6 128L445.2 122L443.1 116.9L441.4 113.2L440.7 112.1L439.6 111.5L438.2 111.6L437.1 112.3L436.5 113.4L436.6 114.8L437.2 118.7L438.3 124.1L439.7 130.5L441.3 137.3L443 144L444.7 150.1L446.9 155.4L449.1 160.6L451.4 165.5L453.8 170.2L456.1 174.8L458.5 179.2L460.9 183.6L463.6 188.1L466.2 192.4L468.7 196.3L470.7 199.5L472.1 201.9L474.8 204.3L478.4 205.1L481.9 203.9L484.3 201.2L485.1 197.6Z" fill="#30201a"/>
<path d="M527.7 209L526.2 206.4L524.2 202.8L521.9 198.6L519.6 194.1L517.4 189.7L515.6 185.7L514 182L512.6 178.1L511.3 174.3L510.1 170.5L509.1 166.7L508.2 163.1L507.3 159.4L506.5 155.4L505.8 151.3L505.2 147.5L504.7 144.3L504.2 141.9L503.8 140.6L502.8 139.7L501.5 139.4L500.2 139.8L499.3 140.8L499 142.1L498.7 144.5L498.3 147.7L497.9 151.7L497.7 156L497.6 160.5L497.8 164.9L498.5 169.1L499.3 173.2L500.4 177.5L501.6 181.7L502.9 186L504.4 190.3L506.3 194.8L508.6 199.6L510.9 204.4L513.2 208.7L515 212.4L516.3 215L518.6 217.4L521.7 218.4L525 217.7L527.4 215.4L528.4 212.3Z" fill="#30201a"/>
<path d="M585.9 220.9L584.6 219.9L582.8 218.6L580.9 217.2L578.9 215.6L576.7 213.7L574.6 211.6L572.1 209.1L569.4 206.2L566.5 203L563.7 199.7L561.1 196.4L558.9 193.1L556.9 189.6L555 186L553.3 182.2L551.7 178.4L550.3 174.5L549.2 170.7L547.8 166.8L546.7 162.3L545.8 157.6L545 153.3L544.3 149.5L543.5 146.8L543.1 145.5L542.1 144.7L540.8 144.5L539.5 144.9L538.7 145.9L538.5 147.2L538.2 150L538 153.8L538 158.4L538 163.4L538.3 168.5L538.8 173.3L540.1 177.7L541.5 182.1L543.1 186.4L544.9 190.7L546.9 194.9L549.1 198.9L551.6 203L554.3 206.9L557.2 210.7L560.1 214.3L562.9 217.5L565.4 220.4L568 223L570.6 225.3L573.1 227.3L575.2 228.9L576.9 230.1L578.1 231.1L581.1 232.3L584.4 231.9L587.1 229.9L588.3 226.9L587.9 223.6Z" fill="#30201a"/>
<path d="M618.2 218.5L617.9 217.4L617.5 215.9L617 214L616.4 211.8L615.7 209.3L614.8 206.4L613.8 203.1L612.6 199.2L611.3 194.9L610 190.5L608.5 186.2L607 182.1L605 178.4L602.8 174.7L600.6 171.2L598.5 168.2L596.7 165.6L595.3 163.9L594.4 162.9L593.2 162.4L591.9 162.7L590.9 163.6L590.4 164.8L590.7 166.1L591.3 168.4L592.3 171.3L593.5 174.8L594.8 178.5L596 182.2L597 185.9L598.2 189.5L599.3 193.7L600.4 198L601.4 202.2L602.4 206.2L603.2 209.6L603.9 212.4L604.4 214.8L604.9 217L605.3 218.8L605.6 220.3L605.8 221.5L607.4 224.4L610.2 226.1L613.5 226.2L616.4 224.6L618.1 221.8Z" fill="#30201a"/>
<path d="M624.9 216.8L625.8 215.2L627.2 212.9L628.9 210L630.7 206.7L632.3 203.1L633.5 199.3L634.1 195.6L634.3 191.9L634.3 188.1L634 184.3L633.5 180.6L632.9 177L631.5 173.3L629.8 169.7L628 166.3L626.1 163.2L624.5 160.7L623.3 159L622.5 157.9L621.3 157.5L620 157.7L618.9 158.5L618.5 159.7L618.7 161L619.1 163.2L620 166L621 169.2L622 172.7L622.8 176L623.1 179L623.4 181.9L623.6 185L623.6 188.2L623.4 191.2L623 194.1L622.5 196.7L621.7 199.1L620.5 201.7L619.1 204.5L617.5 207.1L616.1 209.4L615.1 211.2L614.3 214L615.1 216.9L617.2 218.9L620 219.7L622.9 218.9Z" fill="#30201a"/>
<path d="M615.2 211.3L612.8 212.3L609.6 213.8L605.9 215.4L601.9 217L598 218.4L594.2 219.5L590.3 220.2L586.3 220.9L582.1 221.4L577.9 221.7L573.8 221.8L569.8 221.6L565.8 221.1L561.7 220.2L557.5 219.1L553.3 217.9L549 216.5L544.9 215.1L540.9 213.6L536.9 212.1L533 210.4L529.1 208.7L525.1 206.9L521.1 205.2L517.1 203.5L513 201.6L508.8 199.8L504.6 198L500.6 196.4L496.8 195L493.3 193.9L490 193L486.8 192.2L483.6 191.7L480.2 191.5L476.7 191.6L473.1 192.3L469.6 193.5L466.3 194.9L463.2 196.4L460.2 197.9L457.4 199.2L454.3 200.6L450.9 202.1L447.6 203.7L444.6 205.2L442.1 206.4L440.3 207.3L438.4 208.9L437.6 211.1L438.1 213.5L439.7 215.4L441.9 216.2L444.3 215.7L446.2 214.8L448.7 213.6L451.7 212.2L454.9 210.6L458.1 209.1L461.2 207.8L464.2 206.4L467.3 205L470.2 203.7L472.9 202.6L475.5 201.8L477.9 201.4L480.2 201.2L482.6 201.3L485 201.7L487.7 202.2L490.6 203L493.8 204L497.3 205.2L501.1 206.6L505 208.4L509.2 210.2L513.4 212L517.5 213.8L521.4 215.5L525.3 217.2L529.3 219L533.4 220.7L537.5 222.4L541.7 223.9L546 225.4L550.3 226.9L554.8 228.4L559.4 229.6L564.1 230.7L568.8 231.4L573.6 231.7L578.3 231.7L583 231.5L587.6 231L592.1 230.3L596.4 229.5L600.9 228.4L605.5 227L609.9 225.4L613.9 223.8L617.1 222.6L619.4 221.7L621.7 220L622.9 217.3L622.5 214.4L620.8 212.1L618.1 210.9Z" fill="#5c4034"/>
<path d="M445.2 207.7L443.1 206.8L440.2 205.5L436.9 203.9L433.5 202.2L430.3 200.4L427.7 198.6L425.3 196.6L423 194.3L420.8 191.9L418.8 189.4L416.9 186.7L415.2 184L413.5 181L411.9 177.5L410.4 173.8L409 170.2L407.9 167.2L406.9 165L406.4 164.3L405.7 163.9L404.8 163.9L404.1 164.4L403.7 165.1L403.7 166L404.1 168.3L404.8 171.5L405.6 175.2L406.7 179.3L407.9 183.4L409.4 187L411.2 190.3L413.2 193.4L415.4 196.3L417.7 199.2L420.2 201.9L422.9 204.4L426.1 206.8L429.7 209.1L433.3 211.1L436.7 212.8L439.5 214.2L441.4 215.3L443.5 215.7L445.6 215L447.1 213.4L447.5 211.3L446.8 209.2Z" fill="#7b5b4a"/>
<path d="M439.2 208.7L438.7 211L438.1 214.3L437.3 218.1L436.6 222.3L435.8 226.7L435.1 230.9L434.8 235.2L434.5 239.6L434.3 244L434 248.4L433.6 252.7L433.1 256.9L432.5 261.2L431.5 265.8L430.5 270.5L429.5 274.8L428.7 278.5L428.2 281.2L428.2 281.7L428.5 282.3L429 282.6L429.5 282.6L430.1 282.3L430.4 281.8L431.5 279.4L433 275.9L434.7 271.8L436.5 267.2L438.1 262.6L439.5 258.1L440.4 253.7L441.1 249.2L441.7 244.7L442.3 240.3L442.8 236.1L443.5 232.1L444.1 228L444.9 223.8L445.6 219.7L446.4 215.9L447 212.6L447.4 210.3L447.3 208.1L446.1 206.3L444.1 205.4L441.9 205.5L440.1 206.7Z" fill="#7b5b4a"/>
<path d="M481.2 194.9L479.6 192.6L477.4 189.5L474.9 185.8L472.2 181.7L469.5 177.5L467 173.4L464.6 169.3L462.1 164.9L459.7 160.4L457.3 155.8L455 151L452.8 146.1L450.4 140.7L447.9 134.4L445.5 127.9L443.3 121.9L441.4 116.7L439.9 113L439.4 112.3L438.7 111.9L437.8 111.9L437.1 112.4L436.7 113.1L436.7 114L437.5 117.9L438.8 123.2L440.3 129.6L442.1 136.3L444 142.9L445.8 148.9L448 154.1L450.2 159.2L452.6 164.1L454.9 168.8L457.3 173.2L459.6 177.6L462.1 182L464.8 186.4L467.4 190.7L469.9 194.5L471.9 197.7L473.4 200.1L475.2 201.7L477.6 202.2L479.9 201.4L481.5 199.6L482 197.2Z" fill="#7b5b4a"/>
<path d="M525 209.5L523.6 206.9L521.7 203.3L519.4 199.1L517 194.6L514.8 190.1L513 186L511.5 182.2L510 178.2L508.7 174.3L507.6 170.4L506.6 166.6L505.8 162.9L504.9 159.1L504.3 155L503.8 150.9L503.4 147.1L503 143.8L502.6 141.4L502.3 140.6L501.7 140L500.8 139.8L500 140.1L499.4 140.7L499.2 141.6L499 143.9L498.8 147.2L498.6 151.1L498.5 155.4L498.5 159.8L498.8 164.1L499.6 168.2L500.5 172.3L501.5 176.4L502.8 180.6L504.1 184.8L505.6 189L507.5 193.5L509.7 198.2L512.1 202.9L514.3 207.2L516.2 210.8L517.6 213.5L519 215.1L521.1 215.7L523.3 215.2L524.9 213.8L525.5 211.7Z" fill="#7b5b4a"/>
<path d="M583.9 222.2L582.6 221.2L580.9 219.9L578.9 218.4L576.8 216.7L574.6 214.8L572.3 212.6L569.9 210L567.1 207L564.2 203.8L561.4 200.5L558.8 197L556.5 193.6L554.5 190L552.6 186.3L550.8 182.4L549.3 178.5L547.9 174.5L546.7 170.6L545.5 166.5L544.6 162L543.8 157.3L543.1 152.8L542.5 149.1L542 146.3L541.7 145.5L541 145L540.1 144.8L539.3 145.1L538.8 145.8L538.6 146.7L538.6 149.4L538.5 153.2L538.6 157.7L538.8 162.7L539.2 167.7L539.9 172.4L541.1 176.7L542.5 181L544.1 185.2L545.9 189.4L547.9 193.5L550.1 197.4L552.5 201.3L555.2 205.2L558.1 208.9L561 212.4L563.7 215.6L566.3 218.4L568.8 220.9L571.3 223.2L573.7 225.1L575.8 226.7L577.5 227.9L578.7 228.8L580.7 229.7L582.9 229.4L584.6 228.1L585.5 226.1L585.2 223.9Z" fill="#7b5b4a"/>
<path d="M615.4 218.5L615.1 217.4L614.7 215.9L614.2 214L613.6 211.8L613 209.3L612.1 206.5L611.2 203.1L610 199.2L608.8 194.9L607.4 190.5L606 186.2L604.6 182.3L602.8 178.6L600.7 174.9L598.7 171.3L596.8 168.2L595.1 165.6L593.8 163.7L593.2 163.1L592.4 162.8L591.5 163L590.9 163.6L590.6 164.4L590.8 165.3L591.5 167.4L592.7 170.3L594 173.7L595.5 177.3L596.9 181.1L598 184.7L599.2 188.5L600.4 192.6L601.6 196.9L602.6 201.2L603.6 205.2L604.5 208.5L605.2 211.4L605.8 213.8L606.3 216L606.6 217.8L607 219.3L607.2 220.5L608.2 222.4L610.1 223.5L612.3 223.6L614.2 222.6L615.3 220.7Z" fill="#7b5b4a"/>
<path d="M622.6 215.4L623.5 213.7L624.9 211.4L626.6 208.6L628.3 205.4L629.8 201.9L630.9 198.4L631.5 194.9L631.7 191.3L631.8 187.6L631.5 183.9L631.1 180.4L630.5 176.8L629.3 173.3L627.8 169.7L626.1 166.3L624.4 163.2L622.9 160.6L621.8 158.8L621.3 158.1L620.5 157.8L619.6 158L618.9 158.5L618.6 159.3L618.8 160.2L619.4 162.2L620.4 165L621.5 168.2L622.7 171.7L623.6 175.1L624.1 178.2L624.5 181.2L624.7 184.4L624.7 187.6L624.6 190.8L624.2 193.9L623.7 196.6L622.8 199.2L621.6 202.1L620 204.9L618.5 207.6L617 209.9L616 211.6L615.6 213.5L616.1 215.4L617.4 216.8L619.3 217.2L621.2 216.7Z" fill="#7b5b4a"/>
<path d="M616 214L613.7 215L610.5 216.4L606.7 218L602.6 219.6L598.4 221L594.4 222.1L590.4 222.8L586.2 223.5L582 224L577.6 224.3L573.3 224.4L569.1 224.1L564.9 223.6L560.6 222.6L556.3 221.5L552 220.2L547.8 218.7L543.6 217.3L539.5 215.8L535.5 214.3L531.6 212.6L527.6 210.8L523.7 209.1L519.7 207.4L515.6 205.6L511.5 203.8L507.3 201.9L503.2 200.2L499.2 198.6L495.5 197.3L492.1 196.3L489 195.4L485.9 194.6L482.9 194.2L479.8 194L476.6 194.1L473.4 194.8L470.2 195.8L467 197.1L464 198.6L461 200L458.1 201.4L455 202.8L451.7 204.3L448.4 205.8L445.4 207.3L442.9 208.5L441 209.4L440.3 210.1L439.9 211L440.1 212.1L440.8 212.8L441.7 213.2L442.8 213L444.6 212.1L447.1 210.9L450.1 209.4L453.4 207.9L456.6 206.4L459.7 205L462.7 203.7L465.7 202.2L468.7 200.9L471.6 199.7L474.4 198.8L477.2 198.3L479.8 198.1L482.5 198.2L485.1 198.6L488 199.3L491 200.1L494.3 201.1L497.9 202.3L501.7 203.9L505.7 205.6L509.9 207.4L514 209.3L518.1 211L522.1 212.7L526 214.5L530 216.2L534 217.9L538.1 219.6L542.2 221.1L546.5 222.5L550.8 224L555.2 225.4L559.7 226.6L564.2 227.6L568.7 228.3L573.2 228.6L577.8 228.5L582.3 228.3L586.8 227.8L591.2 227.1L595.4 226.3L599.7 225.2L604.1 223.8L608.4 222.2L612.2 220.6L615.5 219.3L617.8 218.4L618.8 217.7L619.3 216.5L619.1 215.3L618.4 214.3L617.2 213.8Z" fill="#a8887399" filter="url(#b1)"/>
<path d="M443.7 209.6L441.7 208.6L438.8 207.3L435.5 205.7L432 203.9L428.7 202L425.9 200L423.5 197.8L421.1 195.4L418.9 192.9L416.8 190.2L414.9 187.4L413.1 184.5L411.5 181.4L410 177.7L408.6 173.9L407.4 170.3L406.4 167.2L405.6 165L405.4 164.7L405.1 164.5L404.7 164.5L404.4 164.7L404.2 165L404.2 165.4L404.8 167.7L405.6 170.8L406.6 174.5L407.8 178.5L409.1 182.4L410.7 185.9L412.5 188.9L414.4 191.9L416.6 194.8L418.8 197.5L421.3 200L423.9 202.4L426.9 204.7L430.4 206.8L433.9 208.7L437.3 210.4L440.1 211.8L442.1 212.8L443 213L443.9 212.7L444.5 212L444.7 211.1L444.4 210.2Z" fill="#c9aa96aa" filter="url(#b1)"/>
<path d="M441.1 208.9L440.7 211.2L440.1 214.4L439.3 218.2L438.5 222.4L437.8 226.8L437.1 231L436.7 235.1L436.3 239.5L436 243.9L435.6 248.4L435.2 252.7L434.5 256.9L433.7 261.3L432.6 265.9L431.3 270.5L430.1 274.8L429.1 278.4L428.4 281.1L428.4 281.3L428.5 281.5L428.8 281.7L429 281.7L429.2 281.6L429.4 281.3L430.3 278.8L431.6 275.3L433.1 271.1L434.6 266.5L436.1 261.9L437.3 257.5L438.1 253.1L438.7 248.7L439.2 244.2L439.6 239.8L440.1 235.5L440.7 231.4L441.3 227.3L442.1 223.1L442.8 218.9L443.6 215.1L444.2 211.9L444.7 209.5L444.6 208.6L444.1 207.8L443.2 207.4L442.3 207.5L441.5 208Z" fill="#c9aa96aa" filter="url(#b1)"/>
<path d="M478.6 196.1L477 193.8L474.9 190.7L472.4 186.9L469.7 182.8L467 178.5L464.5 174.3L462.1 170.1L459.6 165.7L457.2 161.2L454.8 156.5L452.5 151.6L450.4 146.6L448.1 141L445.8 134.7L443.6 128.1L441.6 121.9L439.9 116.7L438.6 113L438.4 112.7L438.1 112.5L437.7 112.5L437.4 112.7L437.2 113L437.2 113.4L438.2 117.2L439.7 122.5L441.4 128.8L443.4 135.5L445.4 142L447.4 147.8L449.6 152.9L451.9 157.9L454.2 162.7L456.6 167.3L459 171.8L461.3 176.1L463.8 180.4L466.5 184.8L469.2 189L471.7 192.8L473.7 196L475.2 198.3L476 199L477 199.2L478 198.9L478.7 198.1L478.9 197.1Z" fill="#c9aa96aa" filter="url(#b1)"/>
<path d="M522.5 210.4L521.1 207.8L519.2 204.2L516.9 199.9L514.5 195.3L512.3 190.8L510.5 186.6L508.9 182.6L507.5 178.6L506.3 174.6L505.1 170.7L504.2 166.8L503.4 162.9L502.7 159L502.2 154.8L501.9 150.7L501.6 146.8L501.4 143.5L501.2 141.2L501.1 140.8L500.8 140.6L500.5 140.5L500.1 140.6L499.9 140.9L499.8 141.2L499.7 143.6L499.7 146.9L499.7 150.7L499.7 155L500 159.3L500.4 163.5L501.2 167.4L502.1 171.4L503.2 175.5L504.4 179.6L505.8 183.7L507.3 187.8L509.2 192.2L511.4 196.9L513.8 201.5L516.1 205.8L518 209.4L519.3 212L519.9 212.7L520.8 213L521.7 212.8L522.4 212.2L522.7 211.3Z" fill="#c9aa96aa" filter="url(#b1)"/>
<path d="M582 223.8L580.7 222.8L579 221.5L577 220L574.8 218.3L572.5 216.3L570.2 214L567.7 211.3L564.9 208.3L562.1 205L559.3 201.5L556.6 198L554.3 194.4L552.2 190.7L550.3 186.9L548.5 182.9L546.9 178.9L545.5 174.9L544.3 170.8L543.3 166.6L542.5 161.9L541.9 157.1L541.4 152.6L541 148.9L540.6 146.1L540.5 145.8L540.2 145.6L539.8 145.5L539.5 145.6L539.3 145.9L539.2 146.3L539.3 149L539.4 152.8L539.7 157.3L540 162.2L540.6 167L541.5 171.6L542.7 175.8L544.1 179.9L545.7 184.1L547.5 188.2L549.4 192.2L551.5 196L553.9 199.8L556.6 203.5L559.5 207.2L562.3 210.6L565.1 213.7L567.6 216.4L570 218.9L572.5 221L574.8 222.9L576.9 224.4L578.6 225.7L579.8 226.6L580.7 227L581.6 226.9L582.3 226.3L582.7 225.4L582.6 224.5Z" fill="#c9aa96aa" filter="url(#b1)"/>
<path d="M612.6 218.8L612.3 217.6L612 216.1L611.5 214.3L611 212.1L610.3 209.6L609.5 206.8L608.6 203.4L607.5 199.5L606.3 195.2L605 190.8L603.7 186.6L602.3 182.7L600.7 179L598.8 175.3L597 171.7L595.2 168.5L593.7 165.8L592.5 163.9L592.3 163.6L591.9 163.5L591.6 163.6L591.3 163.8L591.2 164.2L591.3 164.5L592.1 166.6L593.4 169.4L595 172.7L596.6 176.3L598.2 180.1L599.5 183.7L600.8 187.5L602 191.7L603.2 196.1L604.4 200.3L605.4 204.3L606.3 207.6L607 210.5L607.6 213L608.1 215.1L608.6 216.9L608.9 218.4L609.2 219.6L609.6 220.4L610.4 220.9L611.3 220.9L612.1 220.5L612.6 219.7Z" fill="#c9aa96aa" filter="url(#b1)"/>
<path d="M620.3 214L621.2 212.3L622.6 210L624.3 207.2L626 204.1L627.4 200.8L628.4 197.6L629 194.3L629.3 190.8L629.3 187.3L629.2 183.8L628.8 180.3L628.3 176.9L627.3 173.5L625.9 170L624.4 166.5L622.8 163.4L621.5 160.8L620.6 158.9L620.3 158.6L620 158.5L619.6 158.5L619.3 158.8L619.2 159.1L619.2 159.5L620 161.5L621.1 164.2L622.4 167.4L623.7 170.8L624.8 174.2L625.5 177.5L626 180.6L626.3 184L626.3 187.3L626.2 190.7L625.9 193.9L625.4 196.8L624.5 199.7L623.1 202.7L621.5 205.7L619.9 208.4L618.5 210.7L617.5 212.4L617.3 213.2L617.5 214L618.1 214.6L618.9 214.8L619.7 214.6Z" fill="#c9aa96aa" filter="url(#b1)"/>
</svg><svg class="abs" style="left:408px;top:595px" width="200" height="50" viewBox="0 0 1720 430">
<defs>
<radialGradient id="gSun" cx="0.45" cy="0.45" r="0.6"><stop offset="0" stop-color="#ffff6a"/><stop offset="0.6" stop-color="#ffee3c"/><stop offset="1" stop-color="#ffc43a"/></radialGradient>
<linearGradient id="gDawn" x1="0" y1="0" x2="0.6" y2="1"><stop offset="0" stop-color="#fbc6cf"/><stop offset="0.6" stop-color="#fff0c8"/><stop offset="1" stop-color="#fdd9c0"/></linearGradient>
<linearGradient id="gDusk" x1="0" y1="0" x2="0.3" y2="1"><stop offset="0" stop-color="#ffd070"/><stop offset="0.55" stop-color="#fff08a"/><stop offset="1" stop-color="#ffc868"/></linearGradient>
<filter id="tb" x="-10%" y="-10%" width="120%" height="120%"><feGaussianBlur stdDeviation="3"/></filter>
</defs>
<g filter="url(#tb)">
<path d="M84 262L99 243A97 97 0 0 1 293 243L308 262Z" fill="url(#gDawn)" stroke="#e93a72" stroke-width="14" stroke-linejoin="round"/>
<path d="M635 91L670.6 116.3L714.1 119.8L725.1 162L756.1 192.6L737.4 232.1L741.5 275.5L701.8 293.7L677.1 329.6L635 318L592.9 329.6L568.2 293.7L528.5 275.5L532.6 232.1L513.9 192.6L544.9 162L555.9 119.8L599.4 116.3Z" fill="#fbb03e" stroke="#f7a23c" stroke-width="10" stroke-linejoin="round"/>
<circle cx="635" cy="214" r="96" fill="url(#gSun)"/>
<path d="M962 268L981 238A104 104 0 0 1 1189 238L1208 268Z" fill="url(#gDusk)" stroke="#b9483a" stroke-width="14" stroke-linejoin="round"/>
<path d="M1490 92A121.5 121.5 0 1 1 1405 272A100.3 100.3 0 0 0 1490 92Z" fill="#b9d5ee" stroke="#8c9197" stroke-width="12" stroke-linejoin="round"/>
</g></svg></div>
  <div class="abs vdiv" style="left:1017px;top:76px;width:3px;height:724px;"></div>

  <div class="abs rh" style="top:76px;">Level Range: 4 - 12</div>
  <div class="abs hdiv" style="left:1020px;top:128px;width:680px;"></div>
  <div class="abs hdiv" style="left:1020px;top:404px;width:680px;"></div>
  <div class="abs rh" style="top:407px;">Modifier Effects</div>
  <div class="abs hdiv" style="left:1020px;top:459px;width:680px;"></div>

  <div class="abs pbtn" style="left:1231px;"><span>Large Prey</span></div>
  <div class="abs pbtn" style="left:1373px;"><span>Prey</span></div>

  <svg class="abs" style="left:1388px;top:225px" width="80" height="56" viewBox="0 0 1720 1204" >
<g fill="none" stroke="#555" stroke-width="40" stroke-linecap="round" stroke-linejoin="round"><path d="M378 600C370 450 430 300 600 218C750 186 950 200 1100 245C1250 290 1370 380 1375 520L1375 650C1365 740 1320 830 1200 845C1050 860 950 910 850 945C750 975 650 990 580 965C450 900 375 780 378 600Z"/><path d="M382 610C400 700 480 800 650 815C780 820 900 740 1020 715C1150 690 1300 700 1370 590"/><path d="M440 520C440 400 520 310 700 290C900 275 1100 320 1200 400C1290 470 1270 590 1150 615C1050 630 950 640 860 690C760 740 650 740 580 700C500 650 445 590 440 520Z"/><circle cx="705" cy="455" r="92"/></g>
</svg>
<svg class="abs" style="left:1268.5px;top:235.9px" width="45.1" height="34.9" viewBox="365 190 1020 795" overflow="visible">
<g fill="none" stroke="#555" stroke-width="40" stroke-linecap="round" stroke-linejoin="round"><path d="M378 600C370 450 430 300 600 218C750 186 950 200 1100 245C1250 290 1370 380 1375 520L1375 650C1365 740 1320 830 1200 845C1050 860 950 910 850 945C750 975 650 990 580 965C450 900 375 780 378 600Z"/><path d="M382 610C400 700 480 800 650 815C780 820 900 740 1020 715C1150 690 1300 700 1370 590"/><path d="M440 520C440 400 520 310 700 290C900 275 1100 320 1200 400C1290 470 1270 590 1150 615C1050 630 950 640 860 690C760 740 650 740 580 700C500 650 445 590 440 520Z"/><circle cx="705" cy="455" r="92"/></g>
</svg>
<div class="abs" style="left:1254.4px;top:234.5px;font-size:22px;line-height:22px;color:#555;font-weight:normal;">L</div>
  <div id="mods" class="abs"><b>Positive Modifiers</b><br>Chase (opening move): +2<br>Rest/Wait: +1<br>Retreat: +2<br>Snarl (opening move): +1</div>

  <div class="abs hdiv" style="left:-3px;top:735px;width:1703px;"></div>
  <div class="abs hdiv" style="left:-3px;top:800px;width:1703px;"></div>
  <div class="abs hdiv" style="left:-3px;top:1091px;width:1703px;"></div>

  <div class="abs" id="mtn"><svg class="abs" style="left:-7px;top:-7px" width="200" height="50" viewBox="0 0 1720 430">
<defs>
<linearGradient id="mgH" x1="0" y1="0" x2="1" y2="0"><stop offset="0" stop-color="#3c5430"/><stop offset="0.2" stop-color="#567540"/><stop offset="0.36" stop-color="#5d8058"/><stop offset="0.42" stop-color="#5b928c"/><stop offset="0.75" stop-color="#5e9c99"/><stop offset="0.9" stop-color="#6f9a86"/><stop offset="1" stop-color="#4d6a4c"/></linearGradient>
<linearGradient id="mgV" x1="0" y1="0" x2="0" y2="1"><stop offset="0" stop-color="#35524f" stop-opacity="0.75"/><stop offset="0.3" stop-color="#4b7a78" stop-opacity="0.3"/><stop offset="0.6" stop-color="#5b9a98" stop-opacity="0"/></linearGradient>
<filter id="mb" x="-10%" y="-30%" width="120%" height="160%"><feGaussianBlur stdDeviation="9"/></filter>
<filter id="mb2" x="-10%" y="-30%" width="120%" height="160%"><feGaussianBlur stdDeviation="4"/></filter>
</defs>
<rect x="0" y="0" width="1720" height="430" fill="url(#mgH)"/>
<rect x="640" y="0" width="1080" height="430" fill="url(#mgV)"/>
<g filter="url(#mb)">
<path d="M40 40L330 40L420 140L520 60L640 60L660 200L600 380L40 380Z" fill="#48663a"/>
<ellipse cx="330" cy="150" rx="90" ry="60" fill="#7f9a52"/>
<ellipse cx="560" cy="170" rx="60" ry="80" fill="#7a9856"/>
<ellipse cx="150" cy="230" rx="80" ry="70" fill="#35502c"/>
<ellipse cx="480" cy="320" rx="120" ry="50" fill="#3e5a34"/>
<ellipse cx="250" cy="330" rx="100" ry="40" fill="#5f7c44"/>
</g>
<g filter="url(#mb2)">
<path d="M660 380L700 300L740 360L800 290L850 350L900 300L960 360L1010 310L1060 360L1120 320L1180 370L1250 290L1300 380Z" fill="#55784a"/>
<path d="M1250 270L1305 400L1195 400Z" fill="#7d9668"/>
<path d="M1370 190L1430 400L1310 400Z" fill="#8fa070"/>
<path d="M1460 105L1530 400L1390 400Z" fill="#a3a878"/>
<path d="M1570 120L1630 400L1510 400Z" fill="#9aa070"/>
<path d="M1660 180L1715 400L1605 400Z" fill="#6f8858"/>
</g>
</svg><span>Mountains</span></div>
  <div class="abs pill" style="left:1155px;border-color:#7a2a2c;background:#cf8585;color:#7a2a2e;">Strength</div>
  <div class="abs pill" style="left:1369px;border-color:#27605c;background:#66b2ae;color:#24605c;">Wisdom</div>

  <div class="abs card" style="left:25px;top:829px;width:167px;height:236px;"><div class="t" style="top:156px;">Elk Bull<br>Carcass</div></div>

  <svg class="abs" style="left:28px;top:835px" width="160" height="150" viewBox="0 0 1508 1414" >
<defs><filter id="cb" filterUnits="userSpaceOnUse" x="0" y="0" width="1508" height="1414"><feGaussianBlur stdDeviation="14"/></filter>
<filter id="cb2" filterUnits="userSpaceOnUse" x="0" y="0" width="1508" height="1414"><feGaussianBlur stdDeviation="5"/></filter>
<filter id="cb3" filterUnits="userSpaceOnUse" x="0" y="0" width="1508" height="1414"><feGaussianBlur stdDeviation="26"/></filter>
<linearGradient id="cgB" x1="0" y1="0" x2="0.2" y2="1"><stop offset="0" stop-color="#9a806a"/><stop offset="0.5" stop-color="#8c705a"/><stop offset="1" stop-color="#5a4538"/></linearGradient></defs>
<g filter="url(#cb2)">
<path d="M1080 980C1089.2 966.7 1149.2 991.7 1180 1000C1210.8 1008.3 1255.8 1008.3 1265 1030C1274.2 1051.7 1249.2 1097.5 1235 1130C1220.8 1162.5 1214.2 1206.7 1180 1225C1145.8 1243.3 1070 1231.7 1030 1240C990 1248.3 966.7 1265 940 1275C913.3 1285 886.3 1300 870 1300C853.7 1300 838.7 1289.2 842 1275C845.3 1260.8 865.3 1232.5 890 1215C914.7 1197.5 955 1179.2 990 1170C1025 1160.8 1077.5 1175 1100 1160C1122.5 1145 1128.3 1110 1125 1080C1121.7 1050 1070.8 993.3 1080 980Z" fill="#3a2d27" stroke="#2a1f1a" stroke-width="10"/>
<clipPath id="ccl"><path d="M470 690C490 657.5 521.7 642.5 560 625C598.3 607.5 646.7 589.5 700 585C753.3 580.5 820 588.8 880 598C940 607.2 1001.7 619.7 1060 640C1118.3 660.3 1184.2 690 1230 720C1275.8 750 1311.3 789.2 1335 820C1358.7 850.8 1372 875 1372 905C1372 935 1353.7 976.7 1335 1000C1316.3 1023.3 1289.2 1043.3 1260 1045C1230.8 1046.7 1195 1020 1160 1010C1125 1000 1088.3 986.7 1050 985C1011.7 983.3 968.3 996.7 930 1000C891.7 1003.3 858.3 1009.2 820 1005C781.7 1000.8 736.7 987.5 700 975C663.3 962.5 633.3 945.8 600 930C566.7 914.2 526.7 898.3 500 880C473.3 861.7 445 851.7 440 820C435 788.3 450 722.5 470 690Z"/></clipPath>
<path d="M470 690C490 657.5 521.7 642.5 560 625C598.3 607.5 646.7 589.5 700 585C753.3 580.5 820 588.8 880 598C940 607.2 1001.7 619.7 1060 640C1118.3 660.3 1184.2 690 1230 720C1275.8 750 1311.3 789.2 1335 820C1358.7 850.8 1372 875 1372 905C1372 935 1353.7 976.7 1335 1000C1316.3 1023.3 1289.2 1043.3 1260 1045C1230.8 1046.7 1195 1020 1160 1010C1125 1000 1088.3 986.7 1050 985C1011.7 983.3 968.3 996.7 930 1000C891.7 1003.3 858.3 1009.2 820 1005C781.7 1000.8 736.7 987.5 700 975C663.3 962.5 633.3 945.8 600 930C566.7 914.2 526.7 898.3 500 880C473.3 861.7 445 851.7 440 820C435 788.3 450 722.5 470 690Z" fill="url(#cgB)" stroke="#2a1f1a" stroke-width="12"/>
<g clip-path="url(#ccl)">
<ellipse cx="1000" cy="730" rx="230" ry="70" fill="#a68e78" filter="url(#cb)" transform="rotate(14 1000 730)"/>
<path d="M400 560L760 560L720 760L700 1020L400 1000Z" fill="#46352c" filter="url(#cb3)"/>
<path d="M700 1010L1250 1060L1250 990L1000 950L700 930Z" fill="#4a382e" filter="url(#cb3)" opacity="0.8"/>
</g>
<path d="M1320 830C1370 870 1372 940 1330 1005L1265 1040C1310 960 1330 900 1320 830Z" fill="#e2d2ba"/>
<path d="M1050 850L1000 930L930 1000L905 980L960 920L1020 850Z" fill="#a8201e"/>
<path d="M1090 810L1060 870" stroke="#a8201e" stroke-width="16" opacity="0.6"/>
<path d="M569.8 929.7L579.3 940.3L592.2 956.9L608.8 978.1L628.5 1001L651.8 1023.1L678.8 1041.3L707.5 1053L735.9 1059.8L763.8 1063.6L791.2 1065.9L817.9 1067.9L844.7 1070.6L875.2 1074.4L909.7 1078.3L945 1082.1L978.1 1085.4L1006 1088.1L1026 1089.7L1041.4 1087.7L1053.8 1078.3L1059.7 1064L1057.7 1048.6L1048.3 1036.2L1034 1030.3L1014.1 1026.6L986.4 1022L953.8 1016.7L919.1 1011L885.5 1005.1L855.3 999.4L827.2 994.4L799.9 990.4L775 986.4L753 981.7L734.9 975.8L721.2 968.7L709.2 958.1L695.9 942.3L682.5 923.1L670 903.1L658.9 884.3L650.2 870.3L629.9 854.1L604.3 850.3L580.3 859.8L564.1 880.1L560.3 905.7Z" fill="#382b25" stroke="#2a1f1a" stroke-width="10"/>
<path d="M617.6 1066.9L626.3 1073.6L638.4 1084L654.1 1097.3L672.9 1111.4L694.6 1124.9L718.6 1135.4L743.9 1142.5L770.6 1147.7L798.4 1151.3L826.5 1153.7L854 1154.9L880.5 1155L907.5 1152.8L935.2 1148.6L961.7 1143.3L985.7 1137.8L1005.4 1133L1019.5 1129.6L1031.2 1124.1L1038.5 1113.4L1039.6 1100.5L1034.1 1088.8L1023.4 1081.5L1010.5 1080.4L995.6 1082.3L975.4 1085.5L952 1089.2L927.1 1092.5L902.4 1094.7L879.5 1095L856.4 1094.1L831.3 1092.2L806 1089.3L781.6 1085.3L759.5 1080.3L741.4 1074.6L726.3 1067.2L711.5 1057.1L697.1 1045.2L683.9 1033L671.9 1021.6L662.4 1013.1L646 1005.5L627.9 1007.1L613.1 1017.6L605.5 1034L607.1 1052.1Z" fill="#33261f" stroke="#2a1f1a" stroke-width="10"/>
<path d="M560 760C536.7 761.7 503.3 788.3 480 810C456.7 831.7 434.7 861.7 420 890C405.3 918.3 395.3 954.2 392 980C388.7 1005.8 390.3 1032 400 1045C409.7 1058 433.3 1063.8 450 1058C466.7 1052.2 484.2 1029.7 500 1010C515.8 990.3 528.3 961.7 545 940C561.7 918.3 587.5 903.3 600 880C612.5 856.7 626.7 820 620 800C613.3 780 583.3 758.3 560 760Z" fill="#4d3b30" stroke="#2a1f1a" stroke-width="10"/>
<path d="M542.1 861.2L550.1 855.8L561.2 848.5L575 839.2L590.9 827.9L608.3 814.6L625.9 799.8L644.5 783.4L665.3 764.9L687.8 744.3L710.6 721.9L732.5 698L752 673.2L768.2 648.2L782.9 622.9L796.1 596.5L807.8 568.8L817.8 539.6L826 508.5L832.1 474.6L836.2 438.2L838.6 401L839.6 364.3L839.4 329.8L838.2 298.3L833.5 268.8L826.6 240.9L818.6 215.9L810.5 194.4L803.4 177.3L798.1 164.8L792.8 155.5L783.6 150L772.8 149.9L763.5 155.2L758 164.4L757.9 175.2L759.4 189.4L762.6 207.9L766.3 229.1L769.6 252.4L771.7 276.8L771.8 301.7L771.7 329.9L770.7 362.3L768.5 396.5L765.1 430.7L760.3 462.9L754 491.5L746.4 516.9L737.4 540.9L727 563.5L715.3 585.3L702.2 606.4L688 626.8L672.3 646.8L653.8 667L633.4 687L612.4 706.2L592.1 724.3L574.1 740.2L558.5 753.8L543.9 765.5L530 775.8L517.4 784.8L506.3 792.5L497.9 798.8L485.3 814L481.9 833.5L488.8 852.1L504 864.7L523.5 868.1Z" fill="#2a1f1a"/>
<path d="M684.1 725L681.5 709.9L678.4 688.4L674.5 662.3L669.5 634.1L663.3 605.8L655.2 579.3L642.8 555.2L628.2 532L612.9 510.3L598.3 491.1L585.8 475.7L576.6 464.8L569.3 457.8L559.4 455.5L549.8 458.4L542.8 465.7L540.5 475.6L543.4 485.2L549.3 498.8L558.4 516.7L569 537.2L579.6 559.1L588.7 580.9L594.8 600.7L600.3 621.2L604.9 645.9L608.7 672L611.6 697.1L614 719L615.9 735L622.9 751.4L637.2 762L655 764.1L671.4 757.1L682 742.8Z" fill="#2a1f1a"/>
<path d="M807.4 552.4L803.8 539.1L799.1 520L793.5 497.4L787.3 473.4L780.7 450.3L774.1 430L765.4 412.8L756.1 397L746.8 383.2L738.1 371.4L730.8 362.3L725.2 355.8L718.3 348.4L708.6 345.5L698.8 347.8L691.4 354.7L688.5 364.4L690.8 374.2L693.4 383L697.6 394.1L702.5 406.8L707.6 420.7L712.2 435.3L715.9 450L720.8 467.3L726 488.8L731.2 512L735.9 534.4L739.8 553.8L742.6 567.6L750.8 582.8L765.4 591.8L782.6 592.4L797.8 584.2L806.8 569.6Z" fill="#2a1f1a"/>
<path d="M832.8 463.1L837 453.4L843.2 439.7L850.6 423.2L858.5 405.1L865.9 386.5L871.9 368.5L875.2 350.2L877.5 331.4L878.9 313.1L879.8 296.5L880.1 282.8L880 272.9L879.1 263.5L873.5 255.9L864.9 252L855.5 252.9L847.9 258.5L844 267.1L840.7 276.8L837.1 290.1L833.1 305.6L828.5 322L823.5 337.8L818.1 351.5L812.5 365.5L805.3 381.6L797.2 398.1L789.3 413.6L782.3 427.1L777.2 436.9L774.4 452.5L779.7 467.5L791.9 477.8L807.5 480.6L822.5 475.3Z" fill="#2a1f1a"/>
<path d="M538.1 855.5L546.1 850L557.2 842.8L571 833.5L586.7 822.3L603.9 809.2L621.3 794.5L639.8 778.1L660.7 759.7L683 739.2L705.6 717L727.2 693.5L746.3 669.1L762.3 644.5L776.7 619.5L789.8 593.5L801.3 566.2L811.1 537.4L819.2 506.9L825.2 473.5L829.2 437.5L831.6 400.5L832.6 364.1L832.4 329.8L831.2 298.6L826.6 269.7L819.8 242.3L811.8 217.6L803.8 196.3L796.7 179.1L791.3 166.6L787.8 160.4L781.7 156.8L774.6 156.7L768.4 160.2L764.8 166.3L764.7 173.4L766.2 187.5L769.3 206L773.1 227.4L776.5 251L778.7 275.9L778.8 301.4L778.7 329.9L777.7 362.5L775.5 397L772 431.4L767.2 464L760.8 493.1L753.1 519L743.9 543.4L733.4 566.5L721.4 588.7L708.1 610.2L693.7 630.9L677.7 651.4L658.9 671.8L638.3 692L617.1 711.4L596.7 729.5L578.7 745.5L563 759.2L548.1 771.1L534 781.5L521.3 790.6L510.3 798.3L501.9 804.5L491.6 816.9L488.9 832.9L494.5 848.1L506.9 858.4L522.9 861.1Z" fill="#5e4438"/>
<path d="M677.2 726L674.6 710.9L671.4 689.3L667.5 663.4L662.6 635.4L656.5 607.5L648.6 581.7L636.4 558.2L622.1 535.4L606.9 513.9L592.4 494.9L579.8 479.4L570.6 468.4L565.9 464L559.6 462.5L553.4 464.4L549 469.1L547.5 475.4L549.4 481.6L555.2 495L564.3 512.9L575 533.6L585.7 555.7L595 577.9L601.4 598.3L607.1 619.5L611.8 644.6L615.6 671L618.6 696.2L620.9 718.1L622.8 734L628.4 747L639.8 755.5L654 757.2L667 751.6L675.5 740.2Z" fill="#5e4438"/>
<path d="M800.6 554L797 540.6L792.3 521.6L786.6 499L780.5 475.1L774 452.2L767.5 432.3L759 415.5L749.8 400.1L740.6 386.5L732 374.8L724.7 365.7L719 359.1L714.6 354.4L708.4 352.5L702.1 354L697.4 358.4L695.5 364.6L697 370.9L699.5 379.6L703.7 390.7L708.6 403.5L713.8 417.7L718.7 432.6L722.5 447.7L727.5 465.4L732.8 487.1L738 510.4L742.7 532.9L746.6 552.2L749.4 566L755.9 578L767.4 585.1L781 585.6L793 579.1L800.1 567.6Z" fill="#5e4438"/>
<path d="M826.5 460.1L830.6 450.3L836.8 436.7L844.3 420.2L852.1 402.3L859.4 384L865.3 366.4L868.4 348.5L870.6 330L872 312L872.9 295.5L873.2 281.7L873.1 271.8L872.5 266L869.1 261.3L863.8 258.9L858 259.5L853.3 262.9L850.9 268.2L847.6 277.8L844 291.2L840 306.8L835.4 323.3L830.3 339.4L824.7 353.6L819 368.1L811.7 384.4L803.6 401.1L795.6 416.7L788.6 430.1L783.5 439.9L781.3 452L785.5 463.5L794.9 471.5L807 473.7L818.5 469.5Z" fill="#5e4438"/>
<path d="M519.4 834.7L527.6 828.9L538.6 821.5L552 812.3L567.2 801.4L583.6 788.7L600.4 774.4L618.7 758.1L639.4 739.8L661.3 719.7L683.2 698.2L703.9 675.7L721.9 652.7L737.3 629.5L751.4 605.7L764 581L775.2 555.2L784.8 528L792.8 499.1L798.9 467.2L803.2 432.4L806 396.3L807.4 360.6L807.6 326.8L806.9 296.6L803.8 268.8L798.6 242.4L792.3 218L785.7 196.7L780 179.1L776 166L774.9 164.1L773.1 163L771 163L769.1 164.1L768 165.9L768 168L770.8 181.6L775.4 199.6L780.6 221L785.6 245L789.4 270.7L791.1 297.4L791.5 326.9L790.9 360.1L789.1 395.2L786.1 430.5L781.5 464.3L775.2 494.9L767.4 522.5L758 548.4L747.1 573L734.8 596.4L721.1 619.2L706.1 641.3L689 663.1L669.2 684.7L647.9 705.6L626.4 725.3L605.8 743.5L587.6 759.6L571.3 773.7L555.6 786L541 796.7L527.9 805.8L516.9 813.4L508.6 819.3L505.5 823.1L504.7 827.9L506.3 832.4L510.1 835.5L514.9 836.3Z" fill="#a08878" opacity="0.8"/>
<path d="M652.2 725.8L649.8 710.4L646.9 688.7L643.4 663L638.8 635.6L633.2 608.7L626.1 584.5L615.9 562.1L603.3 539.5L589.7 517.8L576.5 498.2L565.2 481.9L557.2 470L555.8 468.7L553.9 468.3L552 468.8L550.7 470.2L550.3 472.1L550.8 474L557.8 486.6L568.1 503.6L580.1 523.7L592.4 545.6L603.5 568L611.9 589.5L618.4 612.3L623.6 638.4L627.8 665.3L631.1 690.8L633.7 712.6L635.8 728.2L637.5 732.1L640.9 734.7L645.2 735.2L649.1 733.5L651.7 730.1Z" fill="#a08878" opacity="0.8"/>
<path d="M776.7 555.2L773.4 541.7L768.9 522.5L763.6 500L757.8 476.3L751.7 453.8L745.7 434.7L738.9 418.5L731.2 403.3L723.4 389.4L716.1 377.4L709.9 367.5L705.3 360.2L704 358.8L702.1 358.3L700.2 358.7L698.8 360L698.3 361.9L698.7 363.8L702.3 371.7L707.6 382.2L713.8 394.6L720.4 408.5L726.8 423.6L732.3 439.3L737.8 457.8L743.5 479.9L749 503.4L754 525.9L758.3 545.2L761.3 558.8L763.3 562.4L766.7 564.5L770.8 564.7L774.4 562.7L776.5 559.3Z" fill="#a08878" opacity="0.8"/>
<path d="M805.4 450L809.9 440.2L816.4 426.7L824 410.5L831.9 393L839.3 375.4L845.1 358.9L849.1 342.3L852.3 324.7L854.8 307.2L856.8 291L858.2 277.4L859.3 267.5L859.2 265.8L858.1 264.4L856.5 263.7L854.8 263.8L853.4 264.9L852.7 266.5L850.6 276.2L848.1 289.7L845.2 305.6L841.7 322.7L837.6 339.6L832.9 355.1L827.2 370.7L819.8 387.7L811.8 404.8L804 420.7L797.3 434.2L792.6 444L791.9 447.6L793.1 451.1L796 453.4L799.6 454.1L803.1 452.9Z" fill="#a08878" opacity="0.8"/>
<path d="M465.4 809.8L454.3 800.1L439.1 787.6L421.8 773.1L403.8 757.2L386.3 740.4L370.5 723L354.4 703.8L337.1 682.6L320.4 660.6L305.2 638.3L292.5 616.4L283 595.3L275.6 573.8L269.8 551L266 527.7L264 503.9L264 479.6L265.9 455.5L270 430.7L277 404.3L286.3 376.8L297.3 348.9L309.1 321.5L320.8 295.6L332.1 269.6L345.9 242.5L360.8 215.8L375.1 191L387.1 169.7L395.2 153.6L398.7 143.4L396.6 132.9L389.6 124.8L379.4 121.3L368.9 123.4L360.8 130.4L349.1 143.6L333.4 162.2L314.9 185L295.4 210.5L276.2 237.5L259.2 264.4L245.4 291.7L231.7 320.4L218.5 350.4L206.7 381.4L196.9 413L190.1 444.5L186.8 475.3L185.9 505.8L187.4 536L191.4 566L197.9 595.5L207 624.7L220 653.7L236.2 681.7L254.2 708.2L273 732.9L291.6 755.8L309.5 777L328.7 797.5L349.6 816.9L370 834.4L388.6 849.4L403.8 861.5L414.6 870.2L433.1 878.9L453.4 877.1L470.2 865.4L478.9 846.9L477.1 826.6Z" fill="#2a1f1a"/>
<path d="M276.2 595.6L266.9 586L254.1 573.4L240.2 559.3L226.4 544.1L214.6 529L205.7 514.3L197.8 497.4L190 477.7L183.3 457.3L178.6 437.4L176.3 419.5L176.5 405.9L178.6 392.7L185.9 376L196.8 357.8L209 340.2L220.1 324.5L227.2 312.2L231.3 302.9L230.2 292.9L224.2 284.8L214.9 280.7L204.9 281.8L196.8 287.8L187.1 296.6L173.1 309.4L156.4 325.9L139.4 345.5L124 368.2L113.5 394.1L111.5 421.3L113.7 447.8L118.9 474L126.2 499.3L134.7 523.2L144.3 545.7L157 567.7L172.5 588.5L188.6 607L203.6 622.9L215.8 635.4L223.8 644.4L239.5 654.2L258 654.8L274.4 646.2L284.2 630.5L284.8 612Z" fill="#2a1f1a"/>
<path d="M278.4 354.7L285.7 357.9L296.3 362.8L308.6 368.5L320.8 374.3L331.4 379.2L338.8 382.4L350.5 385.2L362 381.9L370.4 373.2L373.2 361.5L369.9 350L361.2 341.6L354.7 337.1L344.9 330.7L333.4 323.5L322 316.2L312.2 309.8L305.6 305.3L291.5 301.8L277.4 305.8L267.3 316.4L263.8 330.5L267.8 344.6Z" fill="#2a1f1a"/>
<path d="M404.3 796.2L400.8 784.4L396.7 767.1L392.2 746.9L387.7 726.8L383.5 709.4L380.1 697.6L376.5 688.9L369 683.2L359.6 681.9L350.9 685.5L345.2 693L343.9 702.4L343.6 714.6L344 732.5L344.8 753.1L345.6 773.7L346 791.5L345.7 803.8L351.6 817.9L363.7 827.2L378.8 829.3L392.9 823.4L402.2 811.3Z" fill="#2a1f1a"/>
<path d="M484.5 809.1L482.3 797.4L479.8 780.2L477.4 760.3L474.9 740.4L472.5 723.2L470.2 711.4L467.5 702.4L460.6 695.9L451.4 693.8L442.4 696.5L435.9 703.4L433.8 712.6L432.2 724.4L430.9 741.7L429.6 761.7L428.4 781.8L427 799L425.5 810.9L429.9 825.5L441 836L455.9 839.5L470.5 835.1L481 824Z" fill="#2a1f1a"/>
<path d="M460.9 815.1L449.8 805.5L434.7 793L417.3 778.5L399.1 762.3L381.4 745.3L365.3 727.7L349 708.3L331.6 686.9L314.7 664.7L299.3 642L286.3 619.6L276.5 597.8L268.8 575.6L263 552.4L259 528.4L257 504L257 479.2L258.9 454.5L263.2 429.1L270.4 402.2L279.8 374.3L290.8 346.1L302.7 318.5L314.5 292.4L326 266.1L340 238.8L355 211.9L369.3 187L381.3 165.7L389.4 149.7L391.7 143L390.4 136L385.7 130.6L379 128.3L372 129.6L366.6 134.3L354.9 147.6L339.1 166.2L320.8 188.9L301.3 214.3L282.3 241L265.5 267.6L251.8 294.7L238.1 323.2L225.1 353L213.3 383.6L203.7 414.7L197.1 445.5L193.7 475.7L192.9 505.6L194.4 535.3L198.3 564.7L204.6 593.6L213.5 622.2L226.2 650.5L242.1 678L259.9 704.1L278.5 728.6L297 751.3L314.7 772.3L333.7 792.5L354.3 811.7L374.5 829L393.1 844L408.3 856L419.1 864.9L434.3 872L451.1 870.6L464.9 860.9L472 845.7L470.6 828.9Z" fill="#664a3c"/>
<path d="M271 600.4L261.8 590.8L249.1 578.3L235 564L221 548.6L208.7 532.9L199.5 517.5L191.3 500.1L183.3 480L176.5 459L171.7 438.5L169.3 419.7L169.6 404.6L172.2 389.8L180 372.2L191.3 353.5L203.7 335.7L214.7 319.9L221.8 307.8L224.4 301.9L223.6 295.4L219.8 290.2L213.9 287.6L207.4 288.4L202.2 292.2L192.4 301.1L178.4 313.9L161.9 330.2L145.2 349.3L130.4 371.1L120.4 395.4L118.5 421.1L120.6 446.7L125.7 472.2L132.8 497.1L141.2 520.5L150.5 542.5L162.8 563.8L177.9 584L193.7 602.2L208.6 618L220.8 630.5L229 639.6L241.6 647.5L256.4 648L269.6 641L277.5 628.4L278 613.6Z" fill="#664a3c"/>
<path d="M281.7 348.6L289.1 351.7L299.7 356.6L311.9 362.4L324.2 368.2L334.8 373.1L342.1 376.2L350.3 378.2L358.4 375.9L364.2 369.9L366.2 361.7L363.9 353.6L357.9 347.8L351.3 343.2L341.5 336.8L330.1 329.6L318.6 322.3L308.8 316L302.3 311.4L291.6 308.8L281 311.8L273.4 319.7L270.8 330.4L273.8 341Z" fill="#664a3c"/>
<path d="M397.3 797.1L393.9 785.3L389.7 768L385.2 747.8L380.7 727.7L376.6 710.3L373.2 698.5L370.9 693.2L366.3 689.6L360.5 688.8L355.2 691.1L351.6 695.7L350.8 701.5L350.5 713.7L351 731.6L351.8 752.2L352.6 772.8L353 790.6L352.7 802.9L357.1 813.7L366.4 820.8L377.9 822.3L388.7 817.9L395.8 808.6Z" fill="#664a3c"/>
<path d="M477.5 809.3L475.3 797.6L472.9 780.4L470.4 760.5L467.9 740.6L465.5 723.4L463.2 711.7L461.6 706.1L457.3 702.1L451.7 700.8L446.1 702.4L442.1 706.7L440.8 712.3L439.2 724.2L437.9 741.5L436.6 761.5L435.4 781.5L434 798.8L432.5 810.7L435.9 821.8L444.4 829.8L455.7 832.5L466.8 829.1L474.8 820.6Z" fill="#664a3c"/>
<path d="M440.3 829.5L429.3 820.2L414.1 807.9L396.4 793.2L377.4 776.6L358.7 758.9L341.6 740.3L324.8 720.3L307 698.5L289.5 675.5L273.3 651.6L259.3 627.4L248.4 603.3L240.4 578.9L234.3 553.7L230.4 527.8L228.5 501.6L228.8 475L231.3 448.4L236.4 421L244.4 392.7L254.7 363.8L266.4 335.1L278.9 307.2L291.4 280.7L304.7 254.3L320.5 227.2L337 200.8L352.7 176.7L366.1 156.4L375.4 141.3L376.1 139.3L375.7 137.2L374.3 135.6L372.3 134.9L370.2 135.3L368.6 136.7L358.2 150.9L343.7 170.5L326.7 193.9L308.9 219.8L291.6 246.8L276.6 273.3L263.6 300L250.6 328.2L238.2 357.4L227.3 387.1L218.5 416.7L212.7 445.6L209.9 473.9L209.3 502L211 529.9L214.9 557.4L221.1 584.3L229.6 610.7L241.3 636.7L256.1 662.4L273.1 687.3L291.1 711L309.2 733.2L326.4 753.7L344.4 773L364 791.4L383.5 808.3L401.6 823.2L416.8 835.4L427.7 844.5L432.3 846.6L437.3 846.2L441.5 843.3L443.6 838.7L443.2 833.7Z" fill="#b09886" opacity="0.8"/>
<path d="M250.3 611.1L241.5 601.7L229 589.2L214.6 574.4L199.9 558L186.7 540.7L176.3 523.2L167.8 504.2L159.7 482.9L152.7 460.6L147.8 438.4L145.5 417.2L146.4 398.4L151.6 380.3L161.9 361.2L175 342.4L188.8 325.1L200.9 310.4L208.9 299.3L209.7 297.6L209.5 295.6L208.3 294.1L206.6 293.3L204.6 293.5L203.1 294.7L194.2 304.7L181.2 318.6L166.2 335.4L151.4 354.3L139.1 374.6L131.6 395.6L130.2 417.6L132.5 440.8L137.5 464.6L144.5 488.1L152.8 510.4L161.7 530.8L172.9 550L187 568.6L202.2 585.9L216.8 601.1L229.2 613.6L237.7 622.9L241.5 625.2L245.9 625.4L249.9 623.3L252.2 619.5L252.4 615.1Z" fill="#b09886" opacity="0.8"/>
<path d="M282.9 332.6L290 336.2L300.3 341.6L312.3 347.9L324.2 354.2L334.5 359.6L341.6 363.3L344.1 363.9L346.5 363.2L348.3 361.4L348.9 358.9L348.2 356.5L346.4 354.7L339.5 350.7L329.4 344.8L317.7 338.1L306 331.3L295.9 325.5L289.1 321.4L285.9 320.6L282.7 321.5L280.4 323.9L279.6 327.1L280.5 330.3Z" fill="#b09886" opacity="0.8"/>
<path d="M375.7 796.1L373.6 784.2L370.7 766.6L367.5 746.3L364.3 726L361.5 708.5L359.3 696.6L358.7 694.9L357.3 693.9L355.6 693.7L353.9 694.3L352.9 695.7L352.7 697.4L353.7 709.5L355.4 727.2L357.5 747.7L359.6 768.1L361.3 785.8L362.3 797.9L363.6 801.1L366.4 803.2L369.9 803.7L373.1 802.4L375.2 799.6Z" fill="#b09886" opacity="0.8"/>
<path d="M455.7 806.8L454.8 795L453.7 777.8L452.6 757.8L451.4 737.9L450.3 720.7L449.4 708.9L448.9 707.2L447.6 706L445.9 705.6L444.2 706.1L443 707.4L442.6 709.1L442.4 720.9L442.4 738.2L442.4 758.2L442.5 778.1L442.5 795.4L442.3 807.2L443.3 810.6L445.8 812.9L449.2 813.7L452.6 812.7L454.9 810.2Z" fill="#b09886" opacity="0.8"/>
</g></svg>
  <svg class="abs" style="left:28px;top:1165px" width="150" height="150" viewBox="0 0 1414 1414" >
<defs><filter id="sg" filterUnits="userSpaceOnUse" x="0" y="0" width="1414" height="1414"><feGaussianBlur stdDeviation="22"/></filter>
<filter id="sb" filterUnits="userSpaceOnUse" x="0" y="0" width="1414" height="1414"><feGaussianBlur stdDeviation="5"/></filter>
<filter id="sb2" filterUnits="userSpaceOnUse" x="0" y="0" width="1414" height="1414"><feGaussianBlur stdDeviation="40"/></filter>
<radialGradient id="sgP" cx="0.5" cy="0.5" r="0.6"><stop offset="0" stop-color="#dccdaa"/><stop offset="0.6" stop-color="#cdb98c"/><stop offset="1" stop-color="#9a7a48"/></radialGradient></defs>
<g filter="url(#sg)" opacity="0.8"><path d="M300 215C329.2 180 421.7 200.8 480 190C538.3 179.2 593.3 165 650 150C706.7 135 775 106.3 820 100C865 93.7 890 95.3 920 112C950 128.7 978.3 160.3 1000 200C1021.7 239.7 1035 300 1050 350C1065 400 1073.3 450 1090 500C1106.7 550 1123.3 600 1150 650C1176.7 700 1223 755 1250 800C1277 845 1305.3 886.7 1312 920C1318.7 953.3 1312 976.7 1290 1000C1268 1023.3 1228.3 1038.3 1180 1060C1131.7 1081.7 1055 1105 1000 1130C945 1155 896.7 1186.3 850 1210C803.3 1233.7 761.7 1260 720 1272C678.3 1284 631.7 1288.7 600 1282C568.3 1275.3 543.3 1252.3 530 1232C516.7 1211.7 515 1180.3 520 1160C525 1139.7 546.7 1121.7 560 1110C573.3 1098.3 606.7 1111.7 600 1090C593.3 1068.3 546.7 1020 520 980C493.3 940 462.5 893.3 440 850C417.5 806.7 404.7 747.5 385 720C365.3 692.5 331.2 713.3 322 685C312.8 656.7 332.8 597.5 330 550C327.2 502.5 310 455.8 305 400C300 344.2 270.8 250 300 215Z" fill="#f27ab2" stroke="#f27ab2" stroke-width="50"/><circle cx="220" cy="330" r="128" fill="#f27ab2"/></g>
<g filter="url(#sb)">
<path d="M300 215C329.2 180 421.7 200.8 480 190C538.3 179.2 593.3 165 650 150C706.7 135 775 106.3 820 100C865 93.7 890 95.3 920 112C950 128.7 978.3 160.3 1000 200C1021.7 239.7 1035 300 1050 350C1065 400 1073.3 450 1090 500C1106.7 550 1123.3 600 1150 650C1176.7 700 1223 755 1250 800C1277 845 1305.3 886.7 1312 920C1318.7 953.3 1312 976.7 1290 1000C1268 1023.3 1228.3 1038.3 1180 1060C1131.7 1081.7 1055 1105 1000 1130C945 1155 896.7 1186.3 850 1210C803.3 1233.7 761.7 1260 720 1272C678.3 1284 631.7 1288.7 600 1282C568.3 1275.3 543.3 1252.3 530 1232C516.7 1211.7 515 1180.3 520 1160C525 1139.7 546.7 1121.7 560 1110C573.3 1098.3 606.7 1111.7 600 1090C593.3 1068.3 546.7 1020 520 980C493.3 940 462.5 893.3 440 850C417.5 806.7 404.7 747.5 385 720C365.3 692.5 331.2 713.3 322 685C312.8 656.7 332.8 597.5 330 550C327.2 502.5 310 455.8 305 400C300 344.2 270.8 250 300 215Z" fill="url(#sgP)" stroke="#4e3020" stroke-width="14"/>
<clipPath id="scl"><path d="M300 215C329.2 180 421.7 200.8 480 190C538.3 179.2 593.3 165 650 150C706.7 135 775 106.3 820 100C865 93.7 890 95.3 920 112C950 128.7 978.3 160.3 1000 200C1021.7 239.7 1035 300 1050 350C1065 400 1073.3 450 1090 500C1106.7 550 1123.3 600 1150 650C1176.7 700 1223 755 1250 800C1277 845 1305.3 886.7 1312 920C1318.7 953.3 1312 976.7 1290 1000C1268 1023.3 1228.3 1038.3 1180 1060C1131.7 1081.7 1055 1105 1000 1130C945 1155 896.7 1186.3 850 1210C803.3 1233.7 761.7 1260 720 1272C678.3 1284 631.7 1288.7 600 1282C568.3 1275.3 543.3 1252.3 530 1232C516.7 1211.7 515 1180.3 520 1160C525 1139.7 546.7 1121.7 560 1110C573.3 1098.3 606.7 1111.7 600 1090C593.3 1068.3 546.7 1020 520 980C493.3 940 462.5 893.3 440 850C417.5 806.7 404.7 747.5 385 720C365.3 692.5 331.2 713.3 322 685C312.8 656.7 332.8 597.5 330 550C327.2 502.5 310 455.8 305 400C300 344.2 270.8 250 300 215Z"/></clipPath>
<g clip-path="url(#scl)"><ellipse cx="700" cy="600" rx="330" ry="420" fill="#e2d6b8" filter="url(#sb2)" transform="rotate(-25 700 600)"/></g>
<circle cx="222" cy="322" r="112" fill="#8a6a3c" stroke="#432a1c" stroke-width="16"/>
<path d="M300 215C330 300 335 380 300 420" stroke="#432a1c" stroke-width="30" fill="none"/>
<circle cx="215" cy="352" r="48" fill="#f28cc4"/>
<circle cx="592" cy="1192" r="72" fill="#8a6a3c" stroke="#432a1c" stroke-width="14"/>
<path d="M620 1180A30 30 0 1 0 590 1215" stroke="#432a1c" stroke-width="12" fill="none"/>
<g fill="none" stroke="#e02c68" stroke-width="36" stroke-linecap="round">
<path d="M680 500A105 105 0 1 0 690 610"/>
<path d="M650 440A100 100 0 1 1 800 470"/>
<path d="M470 430A190 190 0 0 0 440 580" stroke-dasharray="40 30" stroke-linecap="butt"/>
<path d="M790 250A200 200 0 0 1 900 330" />
<path d="M940 300A220 220 0 0 1 950 450" stroke-dasharray="40 30" stroke-linecap="butt"/>
<path d="M700 720L745 800M745 650L860 890M800 545L905 860M860 510L890 600M905 520L945 640" stroke-width="30"/>
</g>
<circle cx="630" cy="860" r="36" fill="#e02c68"/>
<circle cx="760" cy="892" r="36" fill="#e02c68"/>
<circle cx="730" cy="985" r="36" fill="#e02c68"/>
<circle cx="885" cy="1002" r="36" fill="#e02c68"/>
<circle cx="1012" cy="952" r="36" fill="#e02c68"/>
<circle cx="942" cy="792" r="36" fill="#e02c68"/>
<circle cx="1060" cy="802" r="36" fill="#e02c68"/>
<circle cx="1030" cy="680" r="36" fill="#e02c68"/>
</g></svg>
  <div class="abs card" style="left:211px;top:1119px;width:170px;height:240px;"><div class="t" style="top:161px;">Broken Antler<br>Decor</div></div>
  <div class="abs card" style="left:403px;top:1119px;width:170px;height:240px;"><div class="t" style="top:161px;">Deer Ear<br>Accessory</div></div>
  <div class="abs card" style="left:595px;top:1119px;width:170px;height:240px;"><div class="t" style="top:161px;">Elk Ear<br>Accessory</div></div>
  <div class="abs card" style="left:787px;top:1119px;width:170px;height:240px;"><div class="t" style="top:161px;">Moose Ear<br>Accessory</div></div>
  <div class="abs card" style="left:979px;top:1119px;width:170px;height:240px;"><div class="t" style="top:161px;">Den of Pelts</div></div>
  <svg class="abs" style="left:216px;top:1123px" width="160" height="160" viewBox="0 0 1414 1414" >
<defs><clipPath id="pc1"><rect x="140" y="158" width="1140" height="1132"/></clipPath><filter id="pb1" filterUnits="userSpaceOnUse" x="0" y="0" width="1414" height="1414"><feGaussianBlur stdDeviation="18"/></filter><filter id="ps1" filterUnits="userSpaceOnUse" x="0" y="0" width="1414" height="1414"><feGaussianBlur stdDeviation="6"/></filter><filter id="pf1" filterUnits="userSpaceOnUse" x="0" y="0" width="1414" height="1414"><feTurbulence type="fractalNoise" baseFrequency="0.012 0.035" numOctaves="3" seed="3"/><feColorMatrix type="matrix" values="0 0 0 0 0.2  0 0 0 0 0.12  0 0 0 0 0.05  1.4 1.4 0 0 -1.05"/></filter></defs>
<g clip-path="url(#pc1)">
<rect x="140" y="158" width="1140" height="1132" fill="#d2b172"/>
<g filter="url(#pb1)">
<path d="M140 158L1280 158L1280 700L1000 900L900 820L760 760L560 700L330 600L140 640Z" fill="#9a7a46"/>
<path d="M140 158L520 158L430 330L300 470L140 560Z" fill="#c2a06a"/>
<path d="M1150 158L1280 158L1280 1290L1230 1290L1180 900L1020 560L1000 400Z" fill="#5e3c22"/>
<path d="M1230 620L1280 600L1280 1290L1240 1290Z" fill="#a8552e"/>
<path d="M1000 640L1180 700L1240 1000L1240 1250L1100 1180L980 900Z" fill="#d2a878"/>
<path d="M140 460L300 480L290 620L140 730Z" fill="#5e625a"/>
<path d="M760 760L900 820L1000 1000L1100 1200L1000 1290L900 1100L820 900Z" fill="#8a6838"/>
<ellipse cx="560" cy="330" rx="130" ry="60" fill="#8a6c3c"/>
</g>
<rect x="140" y="158" width="1140" height="1132" filter="url(#pf1)" opacity="0.45"/>
<g filter="url(#ps1)">
<path d="M330 620L420 640L560 700L640 760L600 790L520 740L440 730L350 720Z" fill="#4a3418"/>
<path d="M298.2 610L322.8 612.3L355.7 614.1L392.9 616.2L431.8 619.6L469.3 625L502.7 633L536.5 642.7L573.5 655.7L611.9 671.2L650.4 688.5L688.2 706.9L724 725.8L758.9 743.7L792.8 762.6L825.6 782.5L857.2 803.3L887.4 825.2L916 847.9L943.7 871.2L970.5 896.4L996.4 923.2L1021.4 951.1L1045.6 979.6L1068.5 1007.8L1093.6 1036.2L1118.7 1068.3L1143.1 1101.4L1165.7 1132.5L1185.6 1158.8L1201.7 1177L1207 1182.7L1214.4 1185L1222 1183.3L1227.7 1178L1230 1170.6L1228.3 1163L1222.6 1139.7L1213.2 1108.2L1200.6 1071.1L1185.7 1031L1169.1 990.4L1151.5 952.2L1130.8 918.3L1109 884.5L1085.5 850.5L1060.3 816.9L1033.1 783.9L1004 752.1L972.6 722.6L939.8 694.5L905.6 667.5L870.1 641.9L833.5 617.4L796 594.2L756 573.1L714 552.6L670.6 533.2L626.5 515.4L582.1 499.8L537.3 487L490 479.8L442.2 476.7L397.1 476.3L356.9 477.4L324.6 479L301.8 480L269.1 487.8L244.6 511L235 543.2L242.8 575.9L266 600.4Z" fill="#3a2218"/>
<path d="M303.5 597.5L327.4 599.8L359.3 601.6L395.7 603.7L434.1 607.2L471.5 612.6L505.4 620.8L539.9 630.8L577.6 644L616.5 659.7L655.6 677.2L693.8 695.8L730 714.9L765.2 733L799.5 752.2L832.6 772.4L864.6 793.6L895.1 815.9L924.1 839L952.1 863L979.2 889L1005.4 916.5L1030.7 945L1054.9 973.8L1077.8 1002L1102.2 1029.9L1126.4 1060.9L1149.7 1092.4L1171.1 1121.9L1189.8 1146.6L1205 1163.8L1207.8 1166.8L1211.8 1168L1215.8 1167L1218.8 1164.2L1220 1160.2L1219 1156.2L1213.1 1134.3L1203.6 1104.8L1191.1 1070.1L1176.2 1032.5L1159.7 994.3L1142.2 958L1121.8 925.3L1100.2 892.1L1076.8 858.5L1051.8 825.1L1024.8 792.4L995.9 761L964.9 731.9L932.5 704.2L898.6 677.6L863.5 652.3L827.2 628.1L790 605.1L750.2 584.3L708.5 563.9L665.4 544.7L621.7 527.1L578.1 511.8L534.6 499.2L489 492.2L442.9 489.1L399.3 488.8L360.3 489.9L328.8 491.5L306.5 492.5L280 498.8L260.3 517.5L252.5 543.5L258.8 570L277.5 589.7Z" fill="#8c5e4c"/>
<path d="M330 532L350.3 532.5L377.7 532.3L409.9 532.2L445.1 533.6L481.2 537.4L516.5 544.6L552.9 555.3L592.5 569.2L633.5 585.7L674.8 604L715 623.4L752.8 643.2L788.9 663L823.9 684L857.9 706.1L890.7 729.2L922 753.5L951.8 778.8L981.5 807.4L1011.3 840.3L1040 874.6L1066.1 907.1L1088.1 934.7L1104.5 954.3L1107.4 956.5L1111 956.9L1114.3 955.5L1116.5 952.6L1116.9 949L1115.5 945.7L1100.5 925.2L1079.8 896.6L1055 862.9L1027.2 827.1L997.8 792.2L968.2 761.2L938 734.3L906.4 708.5L873.3 683.9L839 660.4L803.6 638.1L767.2 616.8L728.5 596.6L687.4 576.8L645.2 558.1L603.1 541.2L562.2 526.7L523.5 515.4L485.3 508.6L446.7 505.7L410.1 505.3L377.1 506.3L349.9 507.5L330 508L324 509.6L319.6 514L318 520L319.6 526L324 530.4Z" fill="#b08270" opacity="0.8"/>
<path d="M518 645.5L532.5 661.4L552.3 682.7L574.9 707.6L598.1 734.4L619.6 761.2L637.5 786.4L653.6 811.2L669.2 837.7L683.8 865.3L697.5 893.8L710.2 922.8L721.8 951.7L735 982.5L747.4 1017.4L758.9 1053.5L769.4 1087.6L778.9 1116.6L787.2 1137.3L790.1 1143.4L795.6 1147.2L802.3 1147.8L808.4 1144.9L812.2 1139.4L812.8 1132.7L813.4 1110.6L812.8 1080.2L811.1 1044L808.1 1004.8L803.9 965.3L798.2 928.3L788.7 894.8L778.1 861.8L766.2 829.1L753 796.7L738.6 765L722.5 733.6L702.2 701.9L679 670.1L655.1 639.9L632.9 612.8L614.5 590.6L602 574.5L578.6 558.2L550.2 555.9L524.5 568L508.2 591.4L505.9 619.8Z" fill="#3a2218"/>
<path d="M532.1 642.7L545.8 657.9L564.6 678.5L586.1 702.6L608.3 728.7L629.2 755.1L646.8 780.4L663 805.6L678.7 832.8L693.7 861.2L707.7 890.3L720.7 919.7L732.3 948.6L744.8 978.8L756.3 1012.5L766.8 1046.9L776.2 1079.1L784.7 1106.5L792.1 1126.1L793.4 1128.9L796 1130.6L799.1 1130.9L801.9 1129.6L803.6 1127L803.9 1123.9L804 1103.1L803.2 1074.6L801.2 1040.6L798.1 1003.8L793.6 966.5L787.7 931.4L778.3 898.9L767.8 866.3L755.9 833.8L742.9 801.6L728.7 770.2L713.2 739.6L693.9 709.2L671.7 678.7L648.9 649.9L627.7 624.1L610.1 602.8L597.9 587.3L579.7 574.6L557.5 572.7L537.3 582.1L524.6 600.3L522.7 622.5Z" fill="#7e5444"/>
<path d="M591.5 647L602.8 660.6L618.7 679.1L637.2 701L656.6 725.2L675.2 750.3L691.4 775L706.4 802.1L721.7 833.5L736.4 866.2L749.7 897.2L761 923.6L769.5 942.3L771.4 944.8L774.2 945.9L777.3 945.5L779.8 943.6L780.9 940.8L780.5 937.7L773.3 918.5L763.3 891.7L751.1 860L737.6 826.5L723.2 793.9L708.6 765L692 738.7L673 712.6L653.5 687.7L635 665.4L619.5 646.7L608.5 633L603.9 629.7L598.2 629.1L593 631.5L589.7 636.1L589.1 641.8Z" fill="#a87c6a" opacity="0.8"/>
</g></g>
<g filter="url(#ps1)"><path d="M62 142L1345 138" stroke="#45261c" stroke-width="52" stroke-linecap="round"/>
<path d="M118 1312L1345 1308" stroke="#45261c" stroke-width="52" stroke-linecap="round"/>
<path d="M118 72L122 1372" stroke="#45261c" stroke-width="52" stroke-linecap="round"/>
<path d="M1300 82L1296 1335" stroke="#45261c" stroke-width="52" stroke-linecap="round"/>
<path d="M62 142L1345 138" stroke="#dec8bc" stroke-width="30" stroke-linecap="round"/>
<path d="M118 1312L1345 1308" stroke="#dec8bc" stroke-width="30" stroke-linecap="round"/>
<path d="M118 72L122 1372" stroke="#dec8bc" stroke-width="30" stroke-linecap="round"/>
<path d="M1300 82L1296 1335" stroke="#dec8bc" stroke-width="30" stroke-linecap="round"/>
<path d="M190 122v16M339 122v16M456 121v38M600 121v38M740 120v38M895 120v16M1054 119v16M1182 119v38M248 1292v38M362 1292v16M536 1291v38M696 1291v38M805 1290v16M971 1290v16M1076 1289v16M1193 1289v16M99 219h38M99 345h38M100 480h38M100 655h16M101 784h38M101 955h38M102 1048h16M102 1227h38M1280 215h22M1280 357h22M1279 489h16M1279 661h38M1278 799h16M1278 922h38M1277 1056h22M1277 1213h22" stroke="#6a4234" stroke-width="11" fill="none"/>
<path d="M610 120L600 92M960 1330L948 1360M92 690L70 705M1320 860L1345 850M470 1332L455 1356" stroke="#45261c" stroke-width="16" stroke-linecap="round"/>
<g transform="translate(128 150)"><path d="M-40 -34L40 34M-40 34L40 -34" stroke="#4e2414" stroke-width="30" stroke-linecap="round"/><path d="M-40 -34L40 34M-40 34L40 -34" stroke="#8f4c30" stroke-width="13" stroke-linecap="round"/></g>
<g transform="translate(1292 150)"><path d="M-40 -34L40 34M-40 34L40 -34" stroke="#4e2414" stroke-width="30" stroke-linecap="round"/><path d="M-40 -34L40 34M-40 34L40 -34" stroke="#8f4c30" stroke-width="13" stroke-linecap="round"/></g>
<g transform="translate(128 1300)"><path d="M-40 -34L40 34M-40 34L40 -34" stroke="#4e2414" stroke-width="30" stroke-linecap="round"/><path d="M-40 -34L40 34M-40 34L40 -34" stroke="#8f4c30" stroke-width="13" stroke-linecap="round"/></g>
<g transform="translate(1292 1300)"><path d="M-40 -34L40 34M-40 34L40 -34" stroke="#4e2414" stroke-width="30" stroke-linecap="round"/><path d="M-40 -34L40 34M-40 34L40 -34" stroke="#8f4c30" stroke-width="13" stroke-linecap="round"/></g></g>
</svg>
<svg class="abs" style="left:408px;top:1123px" width="160" height="160" viewBox="0 0 1414 1414" >
<defs><clipPath id="pc2"><rect x="140" y="158" width="1140" height="1132"/></clipPath><filter id="pb2" filterUnits="userSpaceOnUse" x="0" y="0" width="1414" height="1414"><feGaussianBlur stdDeviation="18"/></filter><filter id="ps2" filterUnits="userSpaceOnUse" x="0" y="0" width="1414" height="1414"><feGaussianBlur stdDeviation="6"/></filter><filter id="pf2" filterUnits="userSpaceOnUse" x="0" y="0" width="1414" height="1414"><feTurbulence type="fractalNoise" baseFrequency="0.012 0.035" numOctaves="3" seed="3"/><feColorMatrix type="matrix" values="0 0 0 0 0.2  0 0 0 0 0.12  0 0 0 0 0.05  1.4 1.4 0 0 -1.05"/></filter></defs>
<g clip-path="url(#pc2)">
<rect x="140" y="158" width="1140" height="1132" fill="#7c7263"/>
<g filter="url(#pb2)">
<path d="M600 158L1280 158L1280 620L1000 480L760 380L560 300Z" fill="#6e6454"/>
<path d="M900 200L1280 300L1280 560L1050 460Z" fill="#8a7c60"/>
<path d="M140 158L420 158L400 330L330 420L140 360Z" fill="#d9caa8"/>
<path d="M140 330L220 340L230 560L140 600Z" fill="#161412"/>
<path d="M230 300L470 230L480 330L380 480L240 580Z" fill="#4c4a46"/>
<path d="M140 640L320 620L340 900L140 950Z" fill="#8e96ae"/>
<path d="M140 950L420 880L700 1100L1000 1290L140 1290Z" fill="#c2946c"/>
<path d="M820 830L960 850L1000 1000L900 960Z" fill="#8e96ae"/>
<path d="M900 960L1040 1000L1120 1200L1000 1290L900 1200Z" fill="#b08868"/>
<path d="M1000 820L1280 760L1280 1290L1150 1290L1080 1100Z" fill="#857a68"/>
</g>
<g filter="url(#ps2)">
<path d="M340 1070L375 1090L360 1150L325 1200L310 1150Z" fill="#d96aa0" opacity="0.85"/>
<path d="M360 560C383.3 553.3 426.7 606.7 470 640C513.3 673.3 565 716.7 620 760C675 803.3 743.3 843.3 800 900C856.7 956.7 916.7 1043.3 960 1100C1003.3 1156.7 1070 1226.7 1060 1240C1050 1253.3 960 1206.7 900 1180C840 1153.3 763.3 1116.7 700 1080C636.7 1043.3 573.3 1003.3 520 960C466.7 916.7 411.7 866.7 380 820C348.3 773.3 333.3 723.3 330 680C326.7 636.7 336.7 566.7 360 560Z" fill="#1c1816"/>
<path d="M400 640C415 628.3 470 683.3 520 720C570 756.7 643.3 810 700 860C756.7 910 821.7 976.7 860 1020C898.3 1063.3 946.7 1116.7 930 1120C913.3 1123.3 818.3 1073.3 760 1040C701.7 1006.7 635 961.7 580 920C525 878.3 460 836.7 430 790C400 743.3 385 651.7 400 640Z" fill="#8a8274"/>
<path d="M360 760C420 900 560 1000 760 1080L700 1000C560 940 450 860 400 760Z" fill="#e8e0dc"/>
<path d="M430 430C443.3 423.3 511.7 515 560 560C608.3 605 666.7 650 720 700C773.3 750 833.3 800 880 860C926.7 920 973.3 1003.3 1000 1060C1026.7 1116.7 1050 1196.7 1040 1200C1030 1203.3 980 1130 940 1080C900 1030 850 953.3 800 900C750 846.7 693.3 810 640 760C586.7 710 515 655 480 600C445 545 416.7 436.7 430 430Z" fill="#2a2420"/>
<path d="M470 520C476.7 513.3 551.7 595 600 640C648.3 685 710 736.7 760 790C810 843.3 866.7 911.7 900 960C933.3 1008.3 966.7 1080 960 1080C953.3 1080 900 1003.3 860 960C820 916.7 770 866.7 720 820C670 773.3 601.7 730 560 680C518.3 630 463.3 526.7 470 520Z" fill="#8c8476"/>
<path d="M470 300C491.7 271.7 561.7 313.3 620 330C678.3 346.7 753.3 368.3 820 400C886.7 431.7 960 476.7 1020 520C1080 563.3 1141.7 620 1180 660C1218.3 700 1263.3 736.7 1250 760C1236.7 783.3 1158.3 795 1100 800C1041.7 805 963.3 800 900 790C836.7 780 773.3 765 720 740C666.7 715 618.3 680 580 640C541.7 600 508.3 556.7 490 500C471.7 443.3 448.3 328.3 470 300Z" fill="#1c1816"/>
<path d="M520 470C540 443.3 636.7 445 700 450C763.3 455 836.7 475 900 500C963.3 525 1031.7 563.3 1080 600C1128.3 636.7 1196.7 693.3 1190 720C1183.3 746.7 1095 755 1040 760C985 765 916.7 760 860 750C803.3 740 746.7 723.3 700 700C653.3 676.7 610 648.3 580 610C550 571.7 500 496.7 520 470Z" fill="#dcc4c0"/>
<path d="M540 480C640 440 800 450 920 500L860 560L740 540L640 580Z" fill="#f4eeee"/>
<path d="M820 560C900 540 1000 580 1060 640C980 650 900 640 840 610Z" fill="#6a5a56" filter="url(#ps2)"/>
<path d="M480 300C620 330 800 380 960 480L900 470C760 400 620 360 500 350Z" fill="#5c564e"/>
</g></g>
<g filter="url(#ps2)"><path d="M62 142L1345 138" stroke="#45261c" stroke-width="52" stroke-linecap="round"/>
<path d="M118 1312L1345 1308" stroke="#45261c" stroke-width="52" stroke-linecap="round"/>
<path d="M118 72L122 1372" stroke="#45261c" stroke-width="52" stroke-linecap="round"/>
<path d="M1300 82L1296 1335" stroke="#45261c" stroke-width="52" stroke-linecap="round"/>
<path d="M62 142L1345 138" stroke="#dec8bc" stroke-width="30" stroke-linecap="round"/>
<path d="M118 1312L1345 1308" stroke="#dec8bc" stroke-width="30" stroke-linecap="round"/>
<path d="M118 72L122 1372" stroke="#dec8bc" stroke-width="30" stroke-linecap="round"/>
<path d="M1300 82L1296 1335" stroke="#dec8bc" stroke-width="30" stroke-linecap="round"/>
<path d="M190 122v16M339 122v16M456 121v38M600 121v38M740 120v38M895 120v16M1054 119v16M1182 119v38M248 1292v38M362 1292v16M536 1291v38M696 1291v38M805 1290v16M971 1290v16M1076 1289v16M1193 1289v16M99 219h38M99 345h38M100 480h38M100 655h16M101 784h38M101 955h38M102 1048h16M102 1227h38M1280 215h22M1280 357h22M1279 489h16M1279 661h38M1278 799h16M1278 922h38M1277 1056h22M1277 1213h22" stroke="#6a4234" stroke-width="11" fill="none"/>
<path d="M610 120L600 92M960 1330L948 1360M92 690L70 705M1320 860L1345 850M470 1332L455 1356" stroke="#45261c" stroke-width="16" stroke-linecap="round"/>
<g transform="translate(128 150)"><path d="M-40 -34L40 34M-40 34L40 -34" stroke="#4e2414" stroke-width="30" stroke-linecap="round"/><path d="M-40 -34L40 34M-40 34L40 -34" stroke="#8f4c30" stroke-width="13" stroke-linecap="round"/></g>
<g transform="translate(1292 150)"><path d="M-40 -34L40 34M-40 34L40 -34" stroke="#4e2414" stroke-width="30" stroke-linecap="round"/><path d="M-40 -34L40 34M-40 34L40 -34" stroke="#8f4c30" stroke-width="13" stroke-linecap="round"/></g>
<g transform="translate(128 1300)"><path d="M-40 -34L40 34M-40 34L40 -34" stroke="#4e2414" stroke-width="30" stroke-linecap="round"/><path d="M-40 -34L40 34M-40 34L40 -34" stroke="#8f4c30" stroke-width="13" stroke-linecap="round"/></g>
<g transform="translate(1292 1300)"><path d="M-40 -34L40 34M-40 34L40 -34" stroke="#4e2414" stroke-width="30" stroke-linecap="round"/><path d="M-40 -34L40 34M-40 34L40 -34" stroke="#8f4c30" stroke-width="13" stroke-linecap="round"/></g></g>
</svg>
<svg class="abs" style="left:600px;top:1123px" width="160" height="160" viewBox="0 0 1414 1414" >
<defs><clipPath id="pc3"><rect x="140" y="158" width="1140" height="1132"/></clipPath><filter id="pb3" filterUnits="userSpaceOnUse" x="0" y="0" width="1414" height="1414"><feGaussianBlur stdDeviation="18"/></filter><filter id="ps3" filterUnits="userSpaceOnUse" x="0" y="0" width="1414" height="1414"><feGaussianBlur stdDeviation="6"/></filter><filter id="pf3" filterUnits="userSpaceOnUse" x="0" y="0" width="1414" height="1414"><feTurbulence type="fractalNoise" baseFrequency="0.012 0.035" numOctaves="3" seed="3"/><feColorMatrix type="matrix" values="0 0 0 0 0.2  0 0 0 0 0.12  0 0 0 0 0.05  1.4 1.4 0 0 -1.05"/></filter></defs>
<g clip-path="url(#pc3)">
<rect x="140" y="158" width="1140" height="1132" fill="#2a1a14"/>
<g filter="url(#pb3)">
<path d="M700 158L1280 158L1280 1290L800 1290L760 1100L740 900L780 640L700 440Z" fill="#b4875a"/>
<path d="M780 500L960 420L1100 300L1280 260L1280 600L1000 640L800 760Z" fill="#8e6c4a"/>
<path d="M900 700L1280 560L1280 900L1100 840L900 900Z" fill="#c08c58"/>
<path d="M1100 760L1240 780L1230 960L1120 900Z" fill="#e2c8a0"/>
<path d="M760 1000L1000 1040L1150 1200L1100 1290L800 1290Z" fill="#dcc4a0"/>
<path d="M700 158L900 158L860 300L760 380Z" fill="#c8b088"/>
</g>
<g filter="url(#ps3)">
<path d="M700 440C860 440 1010 340 1100 200" stroke="#2a1a14" stroke-width="120" fill="none"/>
<path d="M700 440C860 440 1010 340 1100 200" stroke="#d8c29a" stroke-width="84" fill="none"/>
<path d="M720 470C870 470 1030 370 1120 230" stroke="#a89070" stroke-width="16" fill="none"/>
<path d="M225 1075C207.7 1056.3 296 982 330 940C364 898 444 805.3 480 760C516 714.7 570.7 634.7 600 600C629.3 565.3 678.7 497.3 700 500C721.3 502.7 750.7 580 760 620C769.3 660 772.7 754.7 770 800C767.3 845.3 757.3 928 740 960C722.7 992 677.3 1024 640 1040C602.7 1056 515.3 1075.3 460 1080C404.7 1084.7 242.3 1093.7 225 1075Z" fill="#d9c3a2"/>
<path d="M400 1000C520 900 640 760 720 620C750 760 740 900 700 980C600 1030 500 1030 400 1000Z" fill="#5a4636" filter="url(#pb3)"/>
<path d="M300 1050C420 980 560 900 700 860L720 960C600 1020 440 1060 300 1050Z" fill="#efe2cc"/>
<ellipse cx="1085" cy="1045" rx="95" ry="62" fill="#1a100c" transform="rotate(25 1085 1045)"/>
<circle cx="1085" cy="1040" r="50" fill="#c8786a"/>
<circle cx="1092" cy="1042" r="20" fill="#7a3a30"/>
</g>
<rect x="700" y="158" width="580" height="1132" filter="url(#pf3)" opacity="0.4"/>
</g>
<g filter="url(#ps3)"><path d="M62 142L1345 138" stroke="#45261c" stroke-width="52" stroke-linecap="round"/>
<path d="M118 1312L1345 1308" stroke="#45261c" stroke-width="52" stroke-linecap="round"/>
<path d="M118 72L122 1372" stroke="#45261c" stroke-width="52" stroke-linecap="round"/>
<path d="M1300 82L1296 1335" stroke="#45261c" stroke-width="52" stroke-linecap="round"/>
<path d="M62 142L1345 138" stroke="#dec8bc" stroke-width="30" stroke-linecap="round"/>
<path d="M118 1312L1345 1308" stroke="#dec8bc" stroke-width="30" stroke-linecap="round"/>
<path d="M118 72L122 1372" stroke="#dec8bc" stroke-width="30" stroke-linecap="round"/>
<path d="M1300 82L1296 1335" stroke="#dec8bc" stroke-width="30" stroke-linecap="round"/>
<path d="M190 122v16M339 122v16M456 121v38M600 121v38M740 120v38M895 120v16M1054 119v16M1182 119v38M248 1292v38M362 1292v16M536 1291v38M696 1291v38M805 1290v16M971 1290v16M1076 1289v16M1193 1289v16M99 219h38M99 345h38M100 480h38M100 655h16M101 784h38M101 955h38M102 1048h16M102 1227h38M1280 215h22M1280 357h22M1279 489h16M1279 661h38M1278 799h16M1278 922h38M1277 1056h22M1277 1213h22" stroke="#6a4234" stroke-width="11" fill="none"/>
<path d="M610 120L600 92M960 1330L948 1360M92 690L70 705M1320 860L1345 850M470 1332L455 1356" stroke="#45261c" stroke-width="16" stroke-linecap="round"/>
<g transform="translate(128 150)"><path d="M-40 -34L40 34M-40 34L40 -34" stroke="#4e2414" stroke-width="30" stroke-linecap="round"/><path d="M-40 -34L40 34M-40 34L40 -34" stroke="#8f4c30" stroke-width="13" stroke-linecap="round"/></g>
<g transform="translate(1292 150)"><path d="M-40 -34L40 34M-40 34L40 -34" stroke="#4e2414" stroke-width="30" stroke-linecap="round"/><path d="M-40 -34L40 34M-40 34L40 -34" stroke="#8f4c30" stroke-width="13" stroke-linecap="round"/></g>
<g transform="translate(128 1300)"><path d="M-40 -34L40 34M-40 34L40 -34" stroke="#4e2414" stroke-width="30" stroke-linecap="round"/><path d="M-40 -34L40 34M-40 34L40 -34" stroke="#8f4c30" stroke-width="13" stroke-linecap="round"/></g>
<g transform="translate(1292 1300)"><path d="M-40 -34L40 34M-40 34L40 -34" stroke="#4e2414" stroke-width="30" stroke-linecap="round"/><path d="M-40 -34L40 34M-40 34L40 -34" stroke="#8f4c30" stroke-width="13" stroke-linecap="round"/></g></g>
</svg>
<svg class="abs" style="left:792px;top:1123px" width="160" height="160" viewBox="0 0 1414 1414" >
<defs><clipPath id="pc4"><rect x="140" y="158" width="1140" height="1132"/></clipPath><filter id="pb4" filterUnits="userSpaceOnUse" x="0" y="0" width="1414" height="1414"><feGaussianBlur stdDeviation="18"/></filter><filter id="ps4" filterUnits="userSpaceOnUse" x="0" y="0" width="1414" height="1414"><feGaussianBlur stdDeviation="6"/></filter><filter id="pf4" filterUnits="userSpaceOnUse" x="0" y="0" width="1414" height="1414"><feTurbulence type="fractalNoise" baseFrequency="0.012 0.035" numOctaves="3" seed="3"/><feColorMatrix type="matrix" values="0 0 0 0 0.2  0 0 0 0 0.12  0 0 0 0 0.05  1.4 1.4 0 0 -1.05"/></filter></defs>
<g clip-path="url(#pc4)">
<rect x="140" y="158" width="1140" height="1132" fill="#5a3420"/>
<g filter="url(#pb4)">
<path d="M140 158L760 158L700 500L600 760L480 900L300 800L140 760Z" fill="#4a1c1c"/>
<path d="M300 300L560 260L520 500L340 560Z" fill="#5e2a26"/>
<path d="M140 158L400 158L300 300L140 330Z" fill="#5a3020"/>
<path d="M140 770L300 800L520 930L620 1150L660 1290L140 1290Z" fill="#6c6c2c"/>
<path d="M200 900L400 940L500 1100L300 1200Z" fill="#7c7a34"/>
<path d="M900 158L1280 158L1280 700L1100 600Z" fill="#7a4426"/>
<path d="M1000 700L1280 700L1280 1290L900 1290Z" fill="#4c2c1c"/>
</g>
<g filter="url(#ps4)">
<path d="M560 740C524 749 503 832 500 880C497 928 519 1004.5 540 1060C561 1115.5 601 1217.8 640 1250C679 1282.2 764 1297.5 800 1275C836 1252.5 871 1147.2 880 1100C889 1052.8 881 1002 860 960C839 918 785 853 740 820C695 787 596 731 560 740Z" fill="#d9d2ba" stroke="#2a1c12" stroke-width="12"/>
<path d="M600 860C588 884 605 989 620 1040C635 1091 673 1182 700 1200C727 1218 786.5 1190 800 1160C813.5 1130 805 1042 790 1000C775 958 728.5 901 700 880C671.5 859 612 836 600 860Z" fill="#8c8470" filter="url(#pb4)"/>
<path d="M640 820C634 820 665 918 680 960C695 1002 734 1100 740 1100C746 1100 735 1002 720 960C705 918 646 820 640 820Z" fill="#2a241c" filter="url(#ps4)"/>
<path d="M660 600C642 612 679 716.5 700 760C721 803.5 761 857 800 890C839 923 906 963.5 960 980C1014 996.5 1139 1012 1160 1000C1181 988 1127 931.5 1100 900C1073 868.5 1022 823 980 790C938 757 868 708.5 820 680C772 651.5 678 588 660 600Z" fill="#d9d2ba" stroke="#2a1c12" stroke-width="12"/>
<path d="M740 720C743 735 818 827 860 860C902 893 1005 940 1020 940C1035 940 987 887 960 860C933 833 873 781 840 760C807 739 737 705 740 720Z" fill="#8c8470" filter="url(#pb4)"/>
<path d="M720 660C714 663 784 764 820 800C856 836 954 903 960 900C966 897 896 816 860 780C824 744 726 657 720 660Z" fill="#2a241c" filter="url(#ps4)"/>
<path d="M730 240C700 264 692.5 370.5 700 420C707.5 469.5 750 534 780 570C810 606 858 649.5 900 660C942 670.5 1015 658 1060 640C1105 622 1174.2 568.5 1200 540C1225.8 511.5 1247 480 1232 450C1217 420 1149.8 368.5 1100 340C1050.2 311.5 955.5 275 900 260C844.5 245 760 216 730 240Z" fill="#d9d2ba" stroke="#2a1c12" stroke-width="12"/>
<path d="M800 380C779 398 830 510 860 540C890 570 958 589 1000 580C1042 571 1140 504 1140 480C1140 456 1051 435 1000 420C949 405 821 362 800 380Z" fill="#8c8470" filter="url(#pb4)"/>
<path d="M780 300C792 297 855 380.5 900 400C945 419.5 1077 418 1080 430C1083 442 959 481.5 920 480C881 478.5 841 447 820 420C799 393 768 303 780 300Z" fill="#2a241c" filter="url(#ps4)"/>
</g></g>
<g filter="url(#ps4)"><path d="M62 142L1345 138" stroke="#45261c" stroke-width="52" stroke-linecap="round"/>
<path d="M118 1312L1345 1308" stroke="#45261c" stroke-width="52" stroke-linecap="round"/>
<path d="M118 72L122 1372" stroke="#45261c" stroke-width="52" stroke-linecap="round"/>
<path d="M1300 82L1296 1335" stroke="#45261c" stroke-width="52" stroke-linecap="round"/>
<path d="M62 142L1345 138" stroke="#dec8bc" stroke-width="30" stroke-linecap="round"/>
<path d="M118 1312L1345 1308" stroke="#dec8bc" stroke-width="30" stroke-linecap="round"/>
<path d="M118 72L122 1372" stroke="#dec8bc" stroke-width="30" stroke-linecap="round"/>
<path d="M1300 82L1296 1335" stroke="#dec8bc" stroke-width="30" stroke-linecap="round"/>
<path d="M190 122v16M339 122v16M456 121v38M600 121v38M740 120v38M895 120v16M1054 119v16M1182 119v38M248 1292v38M362 1292v16M536 1291v38M696 1291v38M805 1290v16M971 1290v16M1076 1289v16M1193 1289v16M99 219h38M99 345h38M100 480h38M100 655h16M101 784h38M101 955h38M102 1048h16M102 1227h38M1280 215h22M1280 357h22M1279 489h16M1279 661h38M1278 799h16M1278 922h38M1277 1056h22M1277 1213h22" stroke="#6a4234" stroke-width="11" fill="none"/>
<path d="M610 120L600 92M960 1330L948 1360M92 690L70 705M1320 860L1345 850M470 1332L455 1356" stroke="#45261c" stroke-width="16" stroke-linecap="round"/>
<g transform="translate(128 150)"><path d="M-40 -34L40 34M-40 34L40 -34" stroke="#4e2414" stroke-width="30" stroke-linecap="round"/><path d="M-40 -34L40 34M-40 34L40 -34" stroke="#8f4c30" stroke-width="13" stroke-linecap="round"/></g>
<g transform="translate(1292 150)"><path d="M-40 -34L40 34M-40 34L40 -34" stroke="#4e2414" stroke-width="30" stroke-linecap="round"/><path d="M-40 -34L40 34M-40 34L40 -34" stroke="#8f4c30" stroke-width="13" stroke-linecap="round"/></g>
<g transform="translate(128 1300)"><path d="M-40 -34L40 34M-40 34L40 -34" stroke="#4e2414" stroke-width="30" stroke-linecap="round"/><path d="M-40 -34L40 34M-40 34L40 -34" stroke="#8f4c30" stroke-width="13" stroke-linecap="round"/></g>
<g transform="translate(1292 1300)"><path d="M-40 -34L40 34M-40 34L40 -34" stroke="#4e2414" stroke-width="30" stroke-linecap="round"/><path d="M-40 -34L40 34M-40 34L40 -34" stroke="#8f4c30" stroke-width="13" stroke-linecap="round"/></g></g>
</svg>
<svg class="abs" style="left:984px;top:1123px" width="160" height="160" viewBox="0 0 1414 1414" >
<defs><linearGradient id="furg" x1="0" y1="0" x2="0" y2="1"><stop offset="0" stop-color="#3e342c"/><stop offset="0.1" stop-color="#6e6054"/><stop offset="0.25" stop-color="#9c9184"/><stop offset="0.5" stop-color="#c4bbab"/><stop offset="0.8" stop-color="#e2dbcb"/><stop offset="1" stop-color="#dcd2bf"/></linearGradient><filter id="pf5" filterUnits="userSpaceOnUse" x="0" y="0" width="1414" height="1414"><feTurbulence type="fractalNoise" baseFrequency="0.008 0.03" numOctaves="3" seed="8"/><feColorMatrix type="matrix" values="0 0 0 0 0.3  0 0 0 0 0.25  0 0 0 0 0.2  1.5 1.5 0 0 -1.15"/></filter><filter id="ps5" filterUnits="userSpaceOnUse" x="0" y="0" width="1414" height="1414"><feGaussianBlur stdDeviation="5"/></filter><clipPath id="pc5"><rect x="140" y="150" width="1130" height="1130" rx="50"/></clipPath></defs>
<g clip-path="url(#pc5)"><rect x="140" y="150" width="1130" height="1130" fill="url(#furg)"/>
<g transform="rotate(12 700 700)"><rect x="0" y="0" width="1414" height="1414" filter="url(#pf5)" opacity="0.35"/></g>
<ellipse cx="900" cy="240" rx="260" ry="50" fill="#5a3c2a" filter="url(#ps5)" opacity="0.5"/>
</g>
<g filter="url(#ps5)">
<path d="M200 130C500 150 800 120 1200 125C1290 130 1300 160 1300 260C1290 600 1320 900 1300 1220C1295 1290 1260 1300 1180 1300C800 1290 500 1310 220 1295C130 1290 110 1260 110 1180C120 800 90 500 105 240C108 160 130 128 200 130Z" fill="none" stroke="#2e1608" stroke-width="84"/>
<path d="M200 130C500 150 800 120 1200 125C1290 130 1300 160 1300 260C1290 600 1320 900 1300 1220C1295 1290 1260 1300 1180 1300C800 1290 500 1310 220 1295C130 1290 110 1260 110 1180C120 800 90 500 105 240C108 160 130 128 200 130Z" fill="none" stroke="#5e3018" stroke-width="54"/>
<path d="M200 130C500 150 800 120 1200 125C1290 130 1300 160 1300 260C1290 600 1320 900 1300 1220C1295 1290 1260 1300 1180 1300C800 1290 500 1310 220 1295C130 1290 110 1260 110 1180C120 800 90 500 105 240C108 160 130 128 200 130Z" fill="none" stroke="#a8683c" stroke-width="11" stroke-dasharray="130 130" transform="translate(-8 -8)"/>
<path d="M760 110C860 80 960 70 1000 90M700 1360C740 1330 800 1310 860 1300" stroke="#3a1e0e" stroke-width="50" fill="none" stroke-linecap="round"/>
<path d="M760 110C860 80 960 70 1000 90M700 1360C740 1330 800 1310 860 1300" stroke="#5e3018" stroke-width="26" fill="none" stroke-linecap="round"/>
<ellipse cx="1338" cy="290" rx="26" ry="62" fill="#e2a02e" stroke="#5a3410" stroke-width="10"/>
<ellipse cx="72" cy="620" rx="26" ry="62" fill="#e2a02e" stroke="#5a3410" stroke-width="10"/>
<ellipse cx="1338" cy="1225" rx="26" ry="62" fill="#e2a02e" stroke="#5a3410" stroke-width="10"/>
</g>
</svg>
</div>
</body>
</html>
